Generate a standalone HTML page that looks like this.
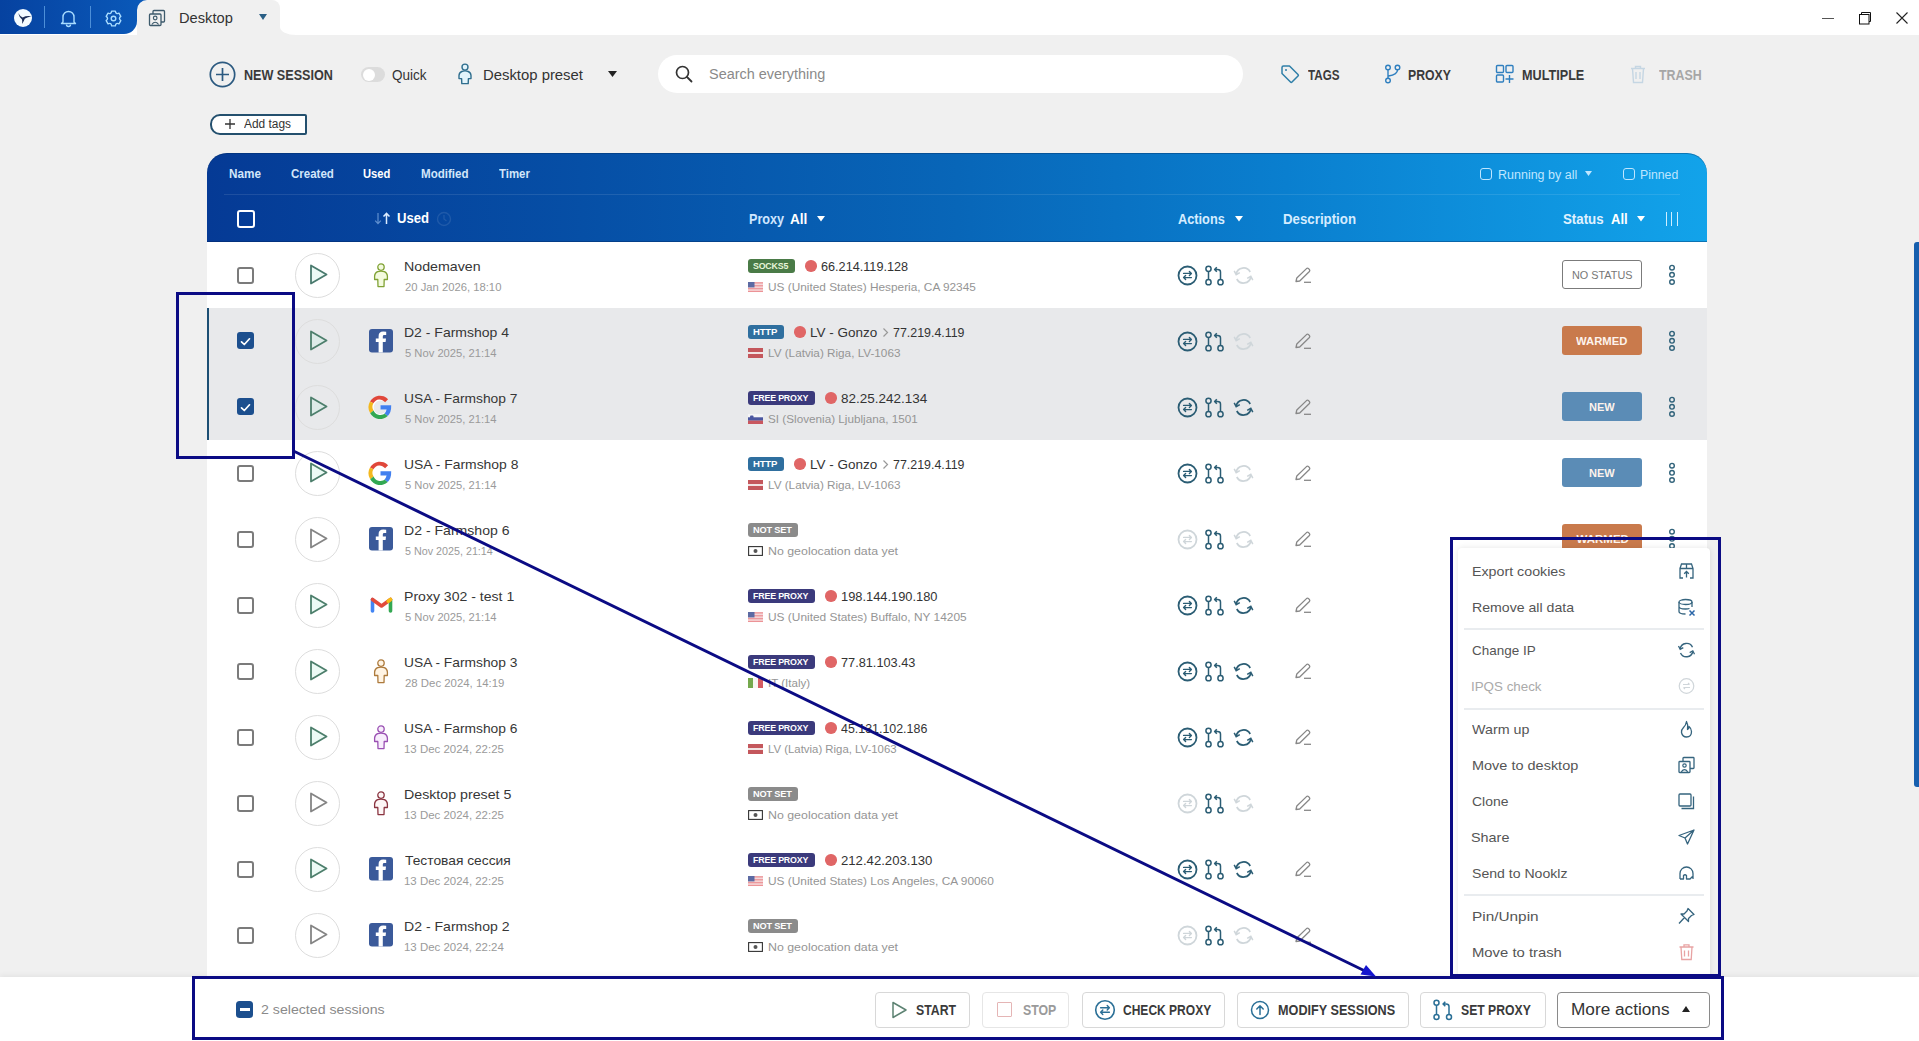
<!DOCTYPE html>
<html><head><meta charset="utf-8"><title>Desktop</title>
<style>
html,body{margin:0;padding:0;}
body{width:1919px;height:1041px;overflow:hidden;position:relative;background:#f0f0f0;font-family:"Liberation Sans", sans-serif;}
.t{position:absolute;white-space:nowrap;transform-origin:0 50%;}
svg{overflow:visible}
</style></head><body>
<div style="position:absolute;left:0;top:0;width:1919px;height:35px;background:#fff"></div>
<div style="position:absolute;left:137px;top:0;width:143px;height:35px;background:#f0f0f0;border-radius:11px 8px 0 0"></div>
<div style="position:absolute;left:0;top:0;width:137px;height:34px;background:linear-gradient(90deg,#0642a0,#0a58b8);border-radius:0 0 13px 0"></div>
<svg style="position:absolute;left:137px;top:0px;" width="10" height="10" viewBox="0 0 10 10"><path d="M0 0 H10 A10 10 0 0 0 0 10 Z" fill="#0a58b8"/></svg>
<svg style="position:absolute;left:280px;top:27px;" width="16" height="8" viewBox="0 0 16 8"><path d="M0 0 V8 H16 A16 8 0 0 1 0 0 Z" fill="#f0f0f0"/></svg>
<svg style="position:absolute;left:13px;top:8px;" width="20" height="20" viewBox="0 0 20 20"><circle cx="10" cy="10" r="9" fill="#f4fbff"/><path d="M5.2 5 Q7 8.4 9.6 9.4 Q13.4 7.6 18.4 8.3 Q13.6 9.3 11.8 10.8 Q10.8 13.6 9.1 15.9 Q9.4 12.6 9 11.4 Q6.2 9.2 5.2 5 Z" fill="#1b2c55"/></svg>
<div style="position:absolute;left:44px;top:6px;width:1px;height:22px;background:#4d8fd8"></div>
<div style="position:absolute;left:90px;top:6px;width:1px;height:22px;background:#4d8fd8"></div>
<svg style="position:absolute;left:60px;top:9px;" width="17" height="18" viewBox="0 0 17 18"><path d="M3 13 L3 8 A5.5 5.5 0 0 1 14 8 L14 13 L15.5 14.5 L1.5 14.5 Z" fill="none" stroke="#a8dcff" stroke-width="1.4" stroke-linejoin="round"/><path d="M6.5 15.5 A2 2 0 0 0 10.5 15.5" fill="none" stroke="#a8dcff" stroke-width="1.4"/></svg>
<svg style="position:absolute;left:105px;top:10px;" width="17" height="17" viewBox="0 0 17 17"><path d="M6.66 1.13 L10.34 1.13 Q10.80 4.52 13.97 3.22 L15.81 6.41 Q13.10 8.50 15.81 10.59 L13.97 13.78 Q10.80 12.48 10.34 15.87 L6.66 15.87 Q6.20 12.48 3.03 13.78 L1.19 10.59 Q3.90 8.50 1.19 6.41 L3.03 3.22 Q6.20 4.52 6.66 1.13 Z" fill="none" stroke="#a8dcff" stroke-width="1.4" stroke-linejoin="round"/><circle cx="8.5" cy="8.5" r="2.3" fill="none" stroke="#a8dcff" stroke-width="1.4"/></svg>
<svg style="position:absolute;left:148px;top:9px;" width="18" height="18" viewBox="0 0 18 18"><rect x="5" y="1.5" width="11.5" height="11.5" rx="1" fill="none" stroke="#3d5a6c" stroke-width="1.3"/><rect x="1.5" y="5" width="11.5" height="11.5" rx="1" fill="#f0f0f0" stroke="#3d5a6c" stroke-width="1.3"/><circle cx="7.2" cy="9" r="1.8" fill="none" stroke="#3d5a6c" stroke-width="1.2"/><path d="M3.8 15.5 Q7.2 11 10.6 15.5" fill="none" stroke="#3d5a6c" stroke-width="1.2"/></svg>
<div id="t45dc8daf" class="t" style="left:178.70px;top:10.65px;font-size:14.00px;line-height:14.00px;color:#333;font-weight:400;transform:scaleX(1.0480);">Desktop</div>
<svg style="position:absolute;left:258px;top:13px;" width="10" height="8" viewBox="0 0 10 8"><path d="M1 1 L9 1 L5 7Z" fill="#2a5f86"/></svg>
<div style="position:absolute;left:1822px;top:17.5px;width:12px;height:1px;background:#555"></div>
<svg style="position:absolute;left:1858px;top:11px;" width="14" height="14" viewBox="0 0 14 14"><rect x="1.5" y="3.5" width="9.5" height="9.5" fill="#fff" stroke="#111" stroke-width="1"/><path d="M3.5 3.5 V1.5 H12.5 V10.5 H11" fill="none" stroke="#111" stroke-width="1"/></svg>
<svg style="position:absolute;left:1896px;top:12px;" width="12" height="12" viewBox="0 0 12 12"><path d="M0.5 0.5 L11.5 11.5 M11.5 0.5 L0.5 11.5" stroke="#222" stroke-width="1.1"/></svg>
<svg style="position:absolute;left:209px;top:61px;" width="27" height="27" viewBox="0 0 27 27"><circle cx="13.5" cy="13.5" r="12.2" fill="none" stroke="#2c5a80" stroke-width="1.7"/><path d="M13.5 7 V20 M7 13.5 H20" stroke="#2c5a80" stroke-width="1.7"/></svg>
<div id="t79973cbb" class="t" style="left:244.25px;top:67.65px;font-size:14.00px;line-height:14.00px;color:#3a3a3a;font-weight:700;transform:scaleX(0.8994);">NEW SESSION</div>
<div style="position:absolute;left:361px;top:67px;width:24px;height:15px;border-radius:8px;background:#dcdcdc"></div>
<div style="position:absolute;left:362.5px;top:68.5px;width:12px;height:12px;border-radius:6px;background:#fff"></div>
<div id="t1a824882" class="t" style="left:392.00px;top:67.65px;font-size:14.00px;line-height:14.00px;color:#333;font-weight:400;transform:scaleX(0.9654);">Quick</div>
<svg style="position:absolute;left:457px;top:62px;" width="16" height="24" viewBox="0 0 16 24"><circle cx="8" cy="5.1" r="3" fill="#e3f4fb" stroke="#2f6e8e" stroke-width="1.4"/><path d="M4.8 9.5 Q8 8.3 11.2 9.5 Q13.8 10.6 14 13.5 V16.6 H11.4 L11.2 21.6 H4.8 L4.6 16.6 H2 V13.5 Q2.2 10.6 4.8 9.5 Z" fill="#e3f4fb" stroke="#2f6e8e" stroke-width="1.4" stroke-linejoin="round"/></svg>
<div id="t51332971" class="t" style="left:482.69px;top:67.65px;font-size:14.00px;line-height:14.00px;color:#333;font-weight:400;transform:scaleX(1.0615);">Desktop preset</div>
<svg style="position:absolute;left:607px;top:70px;" width="11" height="8" viewBox="0 0 11 8"><path d="M1 1 L10 1 L5.5 7Z" fill="#222"/></svg>
<div style="position:absolute;left:658px;top:55px;width:585px;height:38px;border-radius:19px;background:#fff"></div>
<svg style="position:absolute;left:675px;top:65px;" width="18" height="18" viewBox="0 0 18 18"><circle cx="7.5" cy="7.5" r="6" fill="none" stroke="#333" stroke-width="1.7"/><path d="M12 12 L16.5 16.5" stroke="#333" stroke-width="1.8" stroke-linecap="round"/></svg>
<div id="t7c4c2d72" class="t" style="left:709.00px;top:67.15px;font-size:14.00px;line-height:14.00px;color:#8a8a8a;font-weight:400;transform:scaleX(1.0308);">Search everything</div>
<svg style="position:absolute;left:1280px;top:64px;" width="20" height="20" viewBox="0 0 20 20"><path d="M2 3.5 Q2 2 3.5 2 L9.5 2 L18 10.5 Q18.8 11.3 18 12 L12 18 Q11.3 18.8 10.5 18 L2 9.5 Z" fill="none" stroke="#2f7fa8" stroke-width="1.5" stroke-linejoin="round"/><circle cx="6" cy="6" r="1" fill="#2f7fa8"/></svg>
<div id="t0d880b4f" class="t" style="left:1308.00px;top:67.65px;font-size:14.00px;line-height:14.00px;color:#3a3a3a;font-weight:700;transform:scaleX(0.8335);">TAGS</div>
<svg style="position:absolute;left:1384px;top:64px;" width="18" height="20" viewBox="0 0 18 20"><circle cx="4" cy="3.5" r="2.3" fill="none" stroke="#2f7fbf" stroke-width="1.4"/><circle cx="13.5" cy="3.5" r="2.3" fill="none" stroke="#2f7fbf" stroke-width="1.4"/><circle cx="4" cy="16.5" r="2.3" fill="none" stroke="#2f7fbf" stroke-width="1.4"/><path d="M4 6 V14 M13.5 6 Q13.5 10.5 4.5 12" fill="none" stroke="#2f7fbf" stroke-width="1.4"/></svg>
<div id="t71c831db" class="t" style="left:1408.25px;top:67.65px;font-size:14.00px;line-height:14.00px;color:#3a3a3a;font-weight:700;transform:scaleX(0.8759);">PROXY</div>
<svg style="position:absolute;left:1495px;top:64px;" width="20" height="20" viewBox="0 0 20 20"><rect x="1.5" y="1.5" width="7" height="7" rx="1" fill="none" stroke="#2f7fbf" stroke-width="1.4"/><rect x="11" y="1.5" width="7" height="7" rx="1" fill="none" stroke="#2f7fbf" stroke-width="1.4"/><rect x="1.5" y="11" width="7" height="7" rx="1" fill="none" stroke="#2f7fbf" stroke-width="1.4"/><path d="M14.5 11 V19 M10.5 15 H18.5" stroke="#2f7fbf" stroke-width="1.4"/></svg>
<div id="t15b5329f" class="t" style="left:1522.25px;top:67.65px;font-size:14.00px;line-height:14.00px;color:#3a3a3a;font-weight:700;transform:scaleX(0.9036);">MULTIPLE</div>
<svg style="position:absolute;left:1629px;top:64px;" width="18" height="20" viewBox="0 0 18 20"><path d="M2 4.5 H16 M6.5 4.5 V2.5 H11.5 V4.5 M3.5 4.5 L4.5 18.5 H13.5 L14.5 4.5 M7 8 V15 M11 8 V15" fill="none" stroke="#c5d6e3" stroke-width="1.4"/></svg>
<div id="t9c10934f" class="t" style="left:1659.25px;top:67.65px;font-size:14.00px;line-height:14.00px;color:#a6a6a6;font-weight:700;transform:scaleX(0.8836);">TRASH</div>
<div style="position:absolute;left:210px;top:113.5px;width:93px;height:17px;border:2px solid #24506e;border-radius:10px 2px 2px 10px;background:#fff"></div>
<svg style="position:absolute;left:224px;top:118px;" width="12" height="12" viewBox="0 0 12 12"><path d="M6 1 V11 M1 6 H11" stroke="#333" stroke-width="1.3"/></svg>
<div id="t14f7cf8c" class="t" style="left:244.25px;top:118.34px;font-size:12.00px;line-height:12.00px;color:#333;font-weight:400;transform:scaleX(0.9922);">Add tags</div>
<div style="position:absolute;left:207px;top:153px;width:1500px;height:89px;border-radius:20px 20px 0 0;background:linear-gradient(90deg,#053a95 0%,#064fa6 25%,#0866b8 50%,#0a7fcf 72%,#12a3ea 100%);box-shadow:inset 0 1px 0 rgba(0,40,90,0.35)"></div>
<div style="position:absolute;left:224px;top:194px;width:1456px;height:1px;background:rgba(255,255,255,0.10)"></div>
<div style="position:absolute;left:207px;top:241px;width:1500px;height:1px;background:rgba(0,30,80,0.35)"></div>
<div id="t68d6a6e7" class="t" style="left:229.00px;top:167.92px;font-size:12.50px;line-height:12.50px;color:#d2e6fa;font-weight:700;transform:scaleX(0.9386);">Name</div>
<div id="t37dddf84" class="t" style="left:291.00px;top:167.92px;font-size:12.50px;line-height:12.50px;color:#d2e6fa;font-weight:700;transform:scaleX(0.9205);">Created</div>
<div id="t0abc6be5" class="t" style="left:363.25px;top:167.92px;font-size:12.50px;line-height:12.50px;color:#ffffff;font-weight:700;transform:scaleX(0.8946);">Used</div>
<div id="t1608a88f" class="t" style="left:421.00px;top:167.92px;font-size:12.50px;line-height:12.50px;color:#d2e6fa;font-weight:700;transform:scaleX(0.9262);">Modified</div>
<div id="tbfaa99ed" class="t" style="left:499.00px;top:167.92px;font-size:12.50px;line-height:12.50px;color:#d2e6fa;font-weight:700;transform:scaleX(0.9131);">Timer</div>
<div style="position:absolute;left:1480px;top:168px;width:9.5px;height:9.5px;border:1.4px solid #bfe6ff;border-radius:3px"></div>
<div id="tb279ca0c" class="t" style="left:1498.00px;top:168.84px;font-size:12.00px;line-height:12.00px;color:#bfe6ff;font-weight:400;transform:scaleX(1.0414);">Running by all</div>
<svg style="position:absolute;left:1584px;top:170px;" width="9" height="7" viewBox="0 0 9 7"><path d="M1 1 L8 1 L4.5 6Z" fill="#bfe6ff"/></svg>
<div style="position:absolute;left:1623px;top:168px;width:9.5px;height:9.5px;border:1.4px solid #bfe6ff;border-radius:3px"></div>
<div id="tc8197d89" class="t" style="left:1640.25px;top:168.84px;font-size:12.00px;line-height:12.00px;color:#bfe6ff;font-weight:400;transform:scaleX(1.0224);">Pinned</div>
<div style="position:absolute;left:237px;top:210px;width:13.5px;height:13.5px;border:2px solid #fff;border-radius:3px"></div>
<svg style="position:absolute;left:374px;top:212px;" width="18" height="13" viewBox="0 0 18 13"><path d="M4 1 V11.5 M1.2 8.6 L4 11.6 L6.8 8.6" fill="none" stroke="#5f8fcf" stroke-width="1.2"/><path d="M12.5 12 V1.5 M9.5 4.5 L12.5 1.4 L15.5 4.5" fill="none" stroke="#dcecff" stroke-width="1.5"/></svg>
<div id="tecbef1e9" class="t" style="left:397.00px;top:210.73px;font-size:14.50px;line-height:14.50px;color:#ffffff;font-weight:700;transform:scaleX(0.9036);">Used</div>
<svg style="position:absolute;left:436px;top:211px;" width="16" height="16" viewBox="0 0 16 16"><circle cx="8" cy="8" r="6.5" fill="none" stroke="rgba(255,255,255,0.10)" stroke-width="1.4"/><path d="M8 4 V8 L10.5 10" fill="none" stroke="rgba(255,255,255,0.10)" stroke-width="1.3"/></svg>
<div id="td2b10ee0" class="t" style="left:749.00px;top:212.15px;font-size:14.00px;line-height:14.00px;color:#cfe6ff;font-weight:700;transform:scaleX(0.9013);">Proxy</div>
<div id="t0072ece0" class="t" style="left:790.25px;top:212.15px;font-size:14.00px;line-height:14.00px;color:#ffffff;font-weight:700;transform:scaleX(0.9722);">All</div>
<svg style="position:absolute;left:816px;top:215px;" width="10" height="7" viewBox="0 0 10 7"><path d="M1 1 L9 1 L5 6.5Z" fill="#fff"/></svg>
<div id="t325a7944" class="t" style="left:1178.00px;top:212.15px;font-size:14.00px;line-height:14.00px;color:#d5ecff;font-weight:700;transform:scaleX(0.9117);">Actions</div>
<svg style="position:absolute;left:1234px;top:215px;" width="10" height="7" viewBox="0 0 10 7"><path d="M1 1 L9 1 L5 6.5Z" fill="#fff"/></svg>
<div id="t5decaf1a" class="t" style="left:1283.00px;top:212.15px;font-size:14.00px;line-height:14.00px;color:#d5ecff;font-weight:700;transform:scaleX(0.9483);">Description</div>
<div id="t4433726f" class="t" style="left:1563.00px;top:212.15px;font-size:14.00px;line-height:14.00px;color:#e0f2ff;font-weight:700;transform:scaleX(0.9480);">Status</div>
<div id="t497a9a33" class="t" style="left:1611.00px;top:212.15px;font-size:14.00px;line-height:14.00px;color:#ffffff;font-weight:700;transform:scaleX(0.9290);">All</div>
<svg style="position:absolute;left:1636px;top:215px;" width="10" height="7" viewBox="0 0 10 7"><path d="M1 1 L9 1 L5 6.5Z" fill="#fff"/></svg>
<div style="position:absolute;left:1665.5px;top:212px;width:1.3px;height:14px;background:#cfeeff"></div>
<div style="position:absolute;left:1671px;top:212px;width:1.3px;height:14px;background:#cfeeff"></div>
<div style="position:absolute;left:1676.5px;top:212px;width:1.3px;height:14px;background:#cfeeff"></div>
<div style="position:absolute;left:207px;top:242px;width:1500px;height:736px;background:#fff"></div>
<div style="position:absolute;left:237px;top:266.5px;width:13px;height:13px;border:2px solid #7b7b7b;border-radius:3px"></div>
<div style="position:absolute;left:294.5px;top:252.5px;width:43px;height:43px;border:1.5px solid #dddddd;border-radius:50%"></div>
<svg style="position:absolute;left:308px;top:264px;" width="22" height="22" viewBox="0 0 22 22"><path d="M3 1.5 L18.5 10.5 L3 19.5 Z" fill="rgba(200,240,225,0.35)" stroke="#4a7a6e" stroke-width="1.8" stroke-linejoin="round"/></svg>
<svg style="position:absolute;left:373px;top:263px;" width="16" height="24" viewBox="0 0 16 24"><circle cx="8" cy="4.1" r="3.2" fill="#f3fadf" stroke="#80a235" stroke-width="1.3"/><path d="M4.6 8.7 Q8 7.4 11.4 8.7 Q14.2 9.9 14.4 13 V16.5 H11.2 L11 23.6 H5 L4.8 16.5 H1.6 V13 Q1.8 9.9 4.6 8.7 Z" fill="#f3fadf" stroke="#80a235" stroke-width="1.3" stroke-linejoin="round"/></svg>
<div id="taba45b5d" class="t" style="left:403.95px;top:259.57px;font-size:13.50px;line-height:13.50px;color:#363636;font-weight:400;transform:scaleX(1.0521);">Nodemaven</div>
<div id="t9d6233e4" class="t" style="left:405.20px;top:282.27px;font-size:11.50px;line-height:11.50px;color:#9a9a9a;font-weight:400;transform:scaleX(0.9788);">20 Jan 2026, 18:10</div>
<div style="position:absolute;left:748px;top:259.0px;width:47px;height:14px;border-radius:3px;background:#4a7b47"></div>
<div id="t6f3aabb4" class="t" style="left:753.25px;top:261.46px;font-size:9.50px;line-height:9.50px;color:#e7f6d9;font-weight:700;transform:scaleX(0.9282);letter-spacing:-0.2px;">SOCKS5</div>
<div style="position:absolute;left:805.0px;top:260.2px;width:11.5px;height:11.5px;border-radius:50%;background:#e06666"></div>
<div id="t3f5c9be8" class="t" style="left:821.25px;top:260.00px;font-size:13.00px;line-height:13.00px;color:#333;font-weight:400;transform:scaleX(0.9740);">66.214.119.128</div>
<svg style="position:absolute;left:748px;top:281.5px;opacity:0.9" width="15" height="10" viewBox="0 0 15 10"><rect x="0" y="0.00" width="15" height="0.77" fill="#e4666b"/><rect x="0" y="0.77" width="15" height="0.77" fill="#f4d6d8"/><rect x="0" y="1.54" width="15" height="0.77" fill="#e4666b"/><rect x="0" y="2.31" width="15" height="0.77" fill="#f4d6d8"/><rect x="0" y="3.08" width="15" height="0.77" fill="#e4666b"/><rect x="0" y="3.85" width="15" height="0.77" fill="#f4d6d8"/><rect x="0" y="4.62" width="15" height="0.77" fill="#e4666b"/><rect x="0" y="5.39" width="15" height="0.77" fill="#f4d6d8"/><rect x="0" y="6.16" width="15" height="0.77" fill="#e4666b"/><rect x="0" y="6.93" width="15" height="0.77" fill="#f4d6d8"/><rect x="0" y="7.70" width="15" height="0.77" fill="#e4666b"/><rect x="0" y="8.47" width="15" height="0.77" fill="#f4d6d8"/><rect x="0" y="9.24" width="15" height="0.77" fill="#e4666b"/><rect x="0" y="0" width="6.5" height="5.4" fill="#4b5a9a"/></svg>
<div id="t06fbf17f" class="t" style="left:768.00px;top:281.77px;font-size:11.50px;line-height:11.50px;color:#959595;font-weight:400;transform:scaleX(1.0289);">US (United States) Hesperia, CA 92345</div>
<svg style="position:absolute;left:1176.5px;top:264.5px;" width="21" height="21" viewBox="0 0 21 21"><circle cx="10.5" cy="10.5" r="9" fill="none" stroke="#2b5d74" stroke-width="1.8"/><path d="M6.6 8.4 H14.4 M12.4 6.4 L14.4 8.4 L12.4 10.4 M14.4 12.6 H6.6 M8.6 10.6 L6.6 12.6 L8.6 14.6" fill="none" stroke="#2b5d74" stroke-width="1.4" stroke-linecap="round" stroke-linejoin="round"/></svg>
<svg style="position:absolute;left:1204px;top:264.5px;" width="21" height="21" viewBox="0 0 21 21"><circle cx="4.5" cy="3.8" r="2.6" fill="none" stroke="#2b5d74" stroke-width="1.5"/><circle cx="4.5" cy="17.2" r="2.6" fill="none" stroke="#2b5d74" stroke-width="1.5"/><circle cx="16.5" cy="17.2" r="2.6" fill="none" stroke="#2b5d74" stroke-width="1.5"/><path d="M4.5 6.4 V14.6 M16.5 14.6 V7 Q16.5 4.5 13.5 4.5 L11 4.5 M12.8 2.2 L10.6 4.5 L12.8 6.8" fill="none" stroke="#2b5d74" stroke-width="1.5" stroke-linejoin="round"/></svg>
<svg style="position:absolute;left:1232.5px;top:264.5px;" width="21" height="21" viewBox="0 0 21 21"><path d="M3.2 9 A7.5 7.5 0 0 1 17.2 7 M17.8 12 A7.5 7.5 0 0 1 3.8 14" fill="none" stroke="#cfd6da" stroke-width="1.7"/><path d="M1.2 5.8 L3.2 9.6 L6.8 7.6 M19.8 15.2 L17.8 11.4 L14.2 13.4" fill="none" stroke="#cfd6da" stroke-width="1.5"/></svg>
<svg style="position:absolute;left:1294px;top:266.5px;" width="19" height="17" viewBox="0 0 19 17"><path d="M2 14.5 L2.8 11 L12.5 1.6 Q13.5 0.8 14.5 1.6 L15.4 2.5 Q16.2 3.5 15.4 4.5 L5.7 14 Z" fill="none" stroke="#888888" stroke-width="1.3" stroke-linejoin="round"/><path d="M10 15.3 H17" stroke="#888888" stroke-width="1.3"/></svg>
<div style="position:absolute;left:1562px;top:260.0px;width:78px;height:27px;border:1px solid #7b7b7b;border-radius:3px;background:#fff"></div>
<div id="t93c0c0b4" class="t" style="left:1572.00px;top:270.19px;font-size:11.00px;line-height:11.00px;color:#777;font-weight:400;transform:scaleX(0.9860);">NO STATUS</div>
<svg style="position:absolute;left:1668px;top:264px;" width="8" height="22" viewBox="0 0 8 22"><circle cx="4" cy="3.7" r="2.3" fill="none" stroke="#30627a" stroke-width="1.4"/><circle cx="4" cy="10.8" r="2.3" fill="none" stroke="#30627a" stroke-width="1.4"/><circle cx="4" cy="18" r="2.3" fill="none" stroke="#30627a" stroke-width="1.4"/></svg>
<div style="position:absolute;left:207px;top:308px;width:1500px;height:66px;background:#e8e9eb"></div>
<div style="position:absolute;left:207px;top:308px;width:2px;height:66px;background:#1d4f74"></div>
<div style="position:absolute;left:237px;top:332px;width:17px;height:17px;border-radius:3px;background:#1c4f8e"></div>
<svg style="position:absolute;left:237px;top:332.5px;" width="17" height="17" viewBox="0 0 17 17"><path d="M4.5 8.8 L7.3 11.5 L12.5 5.8" fill="none" stroke="#fff" stroke-width="1.7" stroke-linecap="round" stroke-linejoin="round"/></svg>
<div style="position:absolute;left:294.5px;top:318.5px;width:43px;height:43px;border:1.5px solid #dddddd;border-radius:50%"></div>
<svg style="position:absolute;left:308px;top:330px;" width="22" height="22" viewBox="0 0 22 22"><path d="M3 1.5 L18.5 10.5 L3 19.5 Z" fill="rgba(200,240,225,0.35)" stroke="#4d7f6c" stroke-width="1.8" stroke-linejoin="round"/></svg>
<svg style="position:absolute;left:369px;top:329px;" width="24" height="24" viewBox="0 0 24 24"><rect x="0" y="0" width="24" height="23.5" rx="3" fill="#3b5a9a"/><path d="M9.6 23.5 V13 H6.8 V9.6 H9.6 V7.2 Q9.6 2.6 14.2 2.6 L17.2 2.7 V6 H15.2 Q13.8 6 13.8 7.4 V9.6 H17 L16.6 13 H13.8 V23.5 Z" fill="#fff"/></svg>
<div id="tc99fb31c" class="t" style="left:403.96px;top:325.57px;font-size:13.50px;line-height:13.50px;color:#363636;font-weight:400;transform:scaleX(1.0367);">D2 - Farmshop 4</div>
<div id="t6d5245b1" class="t" style="left:405.20px;top:348.27px;font-size:11.50px;line-height:11.50px;color:#9a9a9a;font-weight:400;transform:scaleX(0.9743);">5 Nov 2025, 21:14</div>
<div style="position:absolute;left:748px;top:325.0px;width:36px;height:14px;border-radius:3px;background:#2f6f9f"></div>
<div id="tafebe13c" class="t" style="left:753.25px;top:327.46px;font-size:9.50px;line-height:9.50px;color:#ffffff;font-weight:700;transform:scaleX(1.0054);letter-spacing:-0.2px;">HTTP</div>
<div style="position:absolute;left:794.0px;top:326.2px;width:11.5px;height:11.5px;border-radius:50%;background:#e06666"></div>
<div id="tba149c40" class="t" style="left:809.71px;top:326.00px;font-size:13.00px;line-height:13.00px;color:#333;font-weight:400;transform:scaleX(1.0373);">LV - Gonzo</div>
<svg style="position:absolute;left:881.5px;top:327px;" width="7" height="11" viewBox="0 0 7 11"><path d="M1.5 1.5 L5.5 5.5 L1.5 9.5" fill="none" stroke="#999" stroke-width="1.2"/></svg>
<div id="td32dfa6a" class="t" style="left:893.00px;top:326.00px;font-size:13.00px;line-height:13.00px;color:#333;font-weight:400;transform:scaleX(0.9541);">77.219.4.119</div>
<svg style="position:absolute;left:748px;top:347.5px;" width="15" height="10" viewBox="0 0 15 10"><rect width="15" height="10" fill="#c4575c"/><rect y="4" width="15" height="2" fill="#f1e3e3"/></svg>
<div id="t6880531c" class="t" style="left:768.00px;top:347.77px;font-size:11.50px;line-height:11.50px;color:#959595;font-weight:400;transform:scaleX(1.0187);">LV (Latvia) Riga, LV-1063</div>
<svg style="position:absolute;left:1176.5px;top:330.5px;" width="21" height="21" viewBox="0 0 21 21"><circle cx="10.5" cy="10.5" r="9" fill="none" stroke="#2b5d74" stroke-width="1.8"/><path d="M6.6 8.4 H14.4 M12.4 6.4 L14.4 8.4 L12.4 10.4 M14.4 12.6 H6.6 M8.6 10.6 L6.6 12.6 L8.6 14.6" fill="none" stroke="#2b5d74" stroke-width="1.4" stroke-linecap="round" stroke-linejoin="round"/></svg>
<svg style="position:absolute;left:1204px;top:330.5px;" width="21" height="21" viewBox="0 0 21 21"><circle cx="4.5" cy="3.8" r="2.6" fill="none" stroke="#2b5d74" stroke-width="1.5"/><circle cx="4.5" cy="17.2" r="2.6" fill="none" stroke="#2b5d74" stroke-width="1.5"/><circle cx="16.5" cy="17.2" r="2.6" fill="none" stroke="#2b5d74" stroke-width="1.5"/><path d="M4.5 6.4 V14.6 M16.5 14.6 V7 Q16.5 4.5 13.5 4.5 L11 4.5 M12.8 2.2 L10.6 4.5 L12.8 6.8" fill="none" stroke="#2b5d74" stroke-width="1.5" stroke-linejoin="round"/></svg>
<svg style="position:absolute;left:1232.5px;top:330.5px;" width="21" height="21" viewBox="0 0 21 21"><path d="M3.2 9 A7.5 7.5 0 0 1 17.2 7 M17.8 12 A7.5 7.5 0 0 1 3.8 14" fill="none" stroke="#cfd6da" stroke-width="1.7"/><path d="M1.2 5.8 L3.2 9.6 L6.8 7.6 M19.8 15.2 L17.8 11.4 L14.2 13.4" fill="none" stroke="#cfd6da" stroke-width="1.5"/></svg>
<svg style="position:absolute;left:1294px;top:332.5px;" width="19" height="17" viewBox="0 0 19 17"><path d="M2 14.5 L2.8 11 L12.5 1.6 Q13.5 0.8 14.5 1.6 L15.4 2.5 Q16.2 3.5 15.4 4.5 L5.7 14 Z" fill="none" stroke="#888888" stroke-width="1.3" stroke-linejoin="round"/><path d="M10 15.3 H17" stroke="#888888" stroke-width="1.3"/></svg>
<div style="position:absolute;left:1562px;top:326.0px;width:80px;height:29px;border-radius:3px;background:#c97a4c"></div>
<div id="t92f52804" class="t" style="left:1576.25px;top:335.77px;font-size:11.50px;line-height:11.50px;color:#fdf3ec;font-weight:700;transform:scaleX(0.9796);">WARMED</div>
<svg style="position:absolute;left:1668px;top:330px;" width="8" height="22" viewBox="0 0 8 22"><circle cx="4" cy="3.7" r="2.3" fill="none" stroke="#30627a" stroke-width="1.4"/><circle cx="4" cy="10.8" r="2.3" fill="none" stroke="#30627a" stroke-width="1.4"/><circle cx="4" cy="18" r="2.3" fill="none" stroke="#30627a" stroke-width="1.4"/></svg>
<div style="position:absolute;left:207px;top:374px;width:1500px;height:66px;background:#e8e9eb"></div>
<div style="position:absolute;left:207px;top:374px;width:2px;height:66px;background:#1d4f74"></div>
<div style="position:absolute;left:237px;top:398px;width:17px;height:17px;border-radius:3px;background:#1c4f8e"></div>
<svg style="position:absolute;left:237px;top:398.5px;" width="17" height="17" viewBox="0 0 17 17"><path d="M4.5 8.8 L7.3 11.5 L12.5 5.8" fill="none" stroke="#fff" stroke-width="1.7" stroke-linecap="round" stroke-linejoin="round"/></svg>
<div style="position:absolute;left:294.5px;top:384.5px;width:43px;height:43px;border:1.5px solid #dddddd;border-radius:50%"></div>
<svg style="position:absolute;left:308px;top:396px;" width="22" height="22" viewBox="0 0 22 22"><path d="M3 1.5 L18.5 10.5 L3 19.5 Z" fill="rgba(200,240,225,0.35)" stroke="#4d7f6c" stroke-width="1.8" stroke-linejoin="round"/></svg>
<svg style="position:absolute;left:369px;top:395.5px;" width="23" height="23" viewBox="0 0 23 23"><path d="M21.6 9.5 H11.5 V13.6 H17.3 Q16.5 17.6 11.5 18.2 A6.8 6.8 0 1 1 16 6.3 L19 3.4 A11 11 0 1 0 11.5 22.5 Q22.2 22.5 21.6 9.5Z" fill="#fff"/><path d="M4.4 7.3 A7 7 0 0 1 16.1 6.3 L19.1 3.3 A11.2 11.2 0 0 0 1 5.6 Z" fill="#e0473a"/><path d="M1 5.6 A11.2 11.2 0 0 0 1.2 17.2 L4.6 14.6 A7 7 0 0 1 4.4 7.3 Z" fill="#f3b81f"/><path d="M1.2 17.2 A11.2 11.2 0 0 0 18.8 19.9 L15.6 17.4 A7 7 0 0 1 4.6 14.6 Z" fill="#32a853"/><path d="M18.8 19.9 Q22.4 16.6 22.2 9.3 H11.5 V13.6 H17.6 Q17 15.9 15.6 17.4 Z" fill="#4280ef"/></svg>
<div id="t6e6847e3" class="t" style="left:403.98px;top:391.57px;font-size:13.50px;line-height:13.50px;color:#363636;font-weight:400;transform:scaleX(1.0213);">USA - Farmshop 7</div>
<div id="tb19c0c64" class="t" style="left:405.20px;top:414.27px;font-size:11.50px;line-height:11.50px;color:#9a9a9a;font-weight:400;transform:scaleX(0.9743);">5 Nov 2025, 21:14</div>
<div style="position:absolute;left:748px;top:391.0px;width:67px;height:14px;border-radius:3px;background:#3b3a7c"></div>
<div id="t4a67f150" class="t" style="left:753.25px;top:393.46px;font-size:9.50px;line-height:9.50px;color:#ffffff;font-weight:700;transform:scaleX(0.9318);letter-spacing:-0.2px;">FREE PROXY</div>
<div style="position:absolute;left:825.0px;top:392.2px;width:11.5px;height:11.5px;border-radius:50%;background:#e06666"></div>
<div id="t565e19df" class="t" style="left:841.25px;top:392.00px;font-size:13.00px;line-height:13.00px;color:#333;font-weight:400;transform:scaleX(1.0370);">82.25.242.134</div>
<svg style="position:absolute;left:748px;top:413.5px;" width="15" height="10" viewBox="0 0 15 10"><rect width="15" height="3.4" fill="#f4f4f6"/><rect y="3.3" width="15" height="3.4" fill="#4a56a0"/><rect y="6.6" width="15" height="3.4" fill="#c9575f"/><rect x="2" y="1.5" width="3.5" height="3.6" rx="1" fill="#4a56a0"/></svg>
<div id="tdde76788" class="t" style="left:768.00px;top:413.77px;font-size:11.50px;line-height:11.50px;color:#959595;font-weight:400;transform:scaleX(1.0184);">SI (Slovenia) Ljubljana, 1501</div>
<svg style="position:absolute;left:1176.5px;top:396.5px;" width="21" height="21" viewBox="0 0 21 21"><circle cx="10.5" cy="10.5" r="9" fill="none" stroke="#2b5d74" stroke-width="1.8"/><path d="M6.6 8.4 H14.4 M12.4 6.4 L14.4 8.4 L12.4 10.4 M14.4 12.6 H6.6 M8.6 10.6 L6.6 12.6 L8.6 14.6" fill="none" stroke="#2b5d74" stroke-width="1.4" stroke-linecap="round" stroke-linejoin="round"/></svg>
<svg style="position:absolute;left:1204px;top:396.5px;" width="21" height="21" viewBox="0 0 21 21"><circle cx="4.5" cy="3.8" r="2.6" fill="none" stroke="#2b5d74" stroke-width="1.5"/><circle cx="4.5" cy="17.2" r="2.6" fill="none" stroke="#2b5d74" stroke-width="1.5"/><circle cx="16.5" cy="17.2" r="2.6" fill="none" stroke="#2b5d74" stroke-width="1.5"/><path d="M4.5 6.4 V14.6 M16.5 14.6 V7 Q16.5 4.5 13.5 4.5 L11 4.5 M12.8 2.2 L10.6 4.5 L12.8 6.8" fill="none" stroke="#2b5d74" stroke-width="1.5" stroke-linejoin="round"/></svg>
<svg style="position:absolute;left:1232.5px;top:396.5px;" width="21" height="21" viewBox="0 0 21 21"><path d="M3.2 9 A7.5 7.5 0 0 1 17.2 7 M17.8 12 A7.5 7.5 0 0 1 3.8 14" fill="none" stroke="#2b5d74" stroke-width="1.7"/><path d="M1.2 5.8 L3.2 9.6 L6.8 7.6 M19.8 15.2 L17.8 11.4 L14.2 13.4" fill="none" stroke="#2b5d74" stroke-width="1.5"/></svg>
<svg style="position:absolute;left:1294px;top:398.5px;" width="19" height="17" viewBox="0 0 19 17"><path d="M2 14.5 L2.8 11 L12.5 1.6 Q13.5 0.8 14.5 1.6 L15.4 2.5 Q16.2 3.5 15.4 4.5 L5.7 14 Z" fill="none" stroke="#888888" stroke-width="1.3" stroke-linejoin="round"/><path d="M10 15.3 H17" stroke="#888888" stroke-width="1.3"/></svg>
<div style="position:absolute;left:1562px;top:392.0px;width:80px;height:29px;border-radius:3px;background:#5b8cb6"></div>
<div id="tbf5abbd2" class="t" style="left:1589.00px;top:401.77px;font-size:11.50px;line-height:11.50px;color:#fdf3ec;font-weight:700;transform:scaleX(0.9602);">NEW</div>
<svg style="position:absolute;left:1668px;top:396px;" width="8" height="22" viewBox="0 0 8 22"><circle cx="4" cy="3.7" r="2.3" fill="none" stroke="#30627a" stroke-width="1.4"/><circle cx="4" cy="10.8" r="2.3" fill="none" stroke="#30627a" stroke-width="1.4"/><circle cx="4" cy="18" r="2.3" fill="none" stroke="#30627a" stroke-width="1.4"/></svg>
<div style="position:absolute;left:237px;top:464.5px;width:13px;height:13px;border:2px solid #7b7b7b;border-radius:3px"></div>
<div style="position:absolute;left:294.5px;top:450.5px;width:43px;height:43px;border:1.5px solid #dddddd;border-radius:50%"></div>
<svg style="position:absolute;left:308px;top:462px;" width="22" height="22" viewBox="0 0 22 22"><path d="M3 1.5 L18.5 10.5 L3 19.5 Z" fill="rgba(200,240,225,0.35)" stroke="#4d7f6c" stroke-width="1.8" stroke-linejoin="round"/></svg>
<svg style="position:absolute;left:369px;top:461.5px;" width="23" height="23" viewBox="0 0 23 23"><path d="M21.6 9.5 H11.5 V13.6 H17.3 Q16.5 17.6 11.5 18.2 A6.8 6.8 0 1 1 16 6.3 L19 3.4 A11 11 0 1 0 11.5 22.5 Q22.2 22.5 21.6 9.5Z" fill="#fff"/><path d="M4.4 7.3 A7 7 0 0 1 16.1 6.3 L19.1 3.3 A11.2 11.2 0 0 0 1 5.6 Z" fill="#e0473a"/><path d="M1 5.6 A11.2 11.2 0 0 0 1.2 17.2 L4.6 14.6 A7 7 0 0 1 4.4 7.3 Z" fill="#f3b81f"/><path d="M1.2 17.2 A11.2 11.2 0 0 0 18.8 19.9 L15.6 17.4 A7 7 0 0 1 4.6 14.6 Z" fill="#32a853"/><path d="M18.8 19.9 Q22.4 16.6 22.2 9.3 H11.5 V13.6 H17.6 Q17 15.9 15.6 17.4 Z" fill="#4280ef"/></svg>
<div id="t89fd8aa6" class="t" style="left:403.97px;top:457.57px;font-size:13.50px;line-height:13.50px;color:#363636;font-weight:400;transform:scaleX(1.0305);">USA - Farmshop 8</div>
<div id="t4a329805" class="t" style="left:405.20px;top:480.27px;font-size:11.50px;line-height:11.50px;color:#9a9a9a;font-weight:400;transform:scaleX(0.9745);">5 Nov 2025, 21:14</div>
<div style="position:absolute;left:748px;top:457.0px;width:36px;height:14px;border-radius:3px;background:#2f6f9f"></div>
<div id="ta94cf1d3" class="t" style="left:753.25px;top:459.46px;font-size:9.50px;line-height:9.50px;color:#ffffff;font-weight:700;transform:scaleX(1.0054);letter-spacing:-0.2px;">HTTP</div>
<div style="position:absolute;left:794.0px;top:458.2px;width:11.5px;height:11.5px;border-radius:50%;background:#e06666"></div>
<div id="t5a375c25" class="t" style="left:809.71px;top:458.00px;font-size:13.00px;line-height:13.00px;color:#333;font-weight:400;transform:scaleX(1.0373);">LV - Gonzo</div>
<svg style="position:absolute;left:881.5px;top:459px;" width="7" height="11" viewBox="0 0 7 11"><path d="M1.5 1.5 L5.5 5.5 L1.5 9.5" fill="none" stroke="#999" stroke-width="1.2"/></svg>
<div id="td9aba0a0" class="t" style="left:893.00px;top:458.00px;font-size:13.00px;line-height:13.00px;color:#333;font-weight:400;transform:scaleX(0.9541);">77.219.4.119</div>
<svg style="position:absolute;left:748px;top:479.5px;" width="15" height="10" viewBox="0 0 15 10"><rect width="15" height="10" fill="#c4575c"/><rect y="4" width="15" height="2" fill="#f1e3e3"/></svg>
<div id="t0b9aef72" class="t" style="left:768.00px;top:479.77px;font-size:11.50px;line-height:11.50px;color:#959595;font-weight:400;transform:scaleX(1.0187);">LV (Latvia) Riga, LV-1063</div>
<svg style="position:absolute;left:1176.5px;top:462.5px;" width="21" height="21" viewBox="0 0 21 21"><circle cx="10.5" cy="10.5" r="9" fill="none" stroke="#2b5d74" stroke-width="1.8"/><path d="M6.6 8.4 H14.4 M12.4 6.4 L14.4 8.4 L12.4 10.4 M14.4 12.6 H6.6 M8.6 10.6 L6.6 12.6 L8.6 14.6" fill="none" stroke="#2b5d74" stroke-width="1.4" stroke-linecap="round" stroke-linejoin="round"/></svg>
<svg style="position:absolute;left:1204px;top:462.5px;" width="21" height="21" viewBox="0 0 21 21"><circle cx="4.5" cy="3.8" r="2.6" fill="none" stroke="#2b5d74" stroke-width="1.5"/><circle cx="4.5" cy="17.2" r="2.6" fill="none" stroke="#2b5d74" stroke-width="1.5"/><circle cx="16.5" cy="17.2" r="2.6" fill="none" stroke="#2b5d74" stroke-width="1.5"/><path d="M4.5 6.4 V14.6 M16.5 14.6 V7 Q16.5 4.5 13.5 4.5 L11 4.5 M12.8 2.2 L10.6 4.5 L12.8 6.8" fill="none" stroke="#2b5d74" stroke-width="1.5" stroke-linejoin="round"/></svg>
<svg style="position:absolute;left:1232.5px;top:462.5px;" width="21" height="21" viewBox="0 0 21 21"><path d="M3.2 9 A7.5 7.5 0 0 1 17.2 7 M17.8 12 A7.5 7.5 0 0 1 3.8 14" fill="none" stroke="#cfd6da" stroke-width="1.7"/><path d="M1.2 5.8 L3.2 9.6 L6.8 7.6 M19.8 15.2 L17.8 11.4 L14.2 13.4" fill="none" stroke="#cfd6da" stroke-width="1.5"/></svg>
<svg style="position:absolute;left:1294px;top:464.5px;" width="19" height="17" viewBox="0 0 19 17"><path d="M2 14.5 L2.8 11 L12.5 1.6 Q13.5 0.8 14.5 1.6 L15.4 2.5 Q16.2 3.5 15.4 4.5 L5.7 14 Z" fill="none" stroke="#888888" stroke-width="1.3" stroke-linejoin="round"/><path d="M10 15.3 H17" stroke="#888888" stroke-width="1.3"/></svg>
<div style="position:absolute;left:1562px;top:458.0px;width:80px;height:29px;border-radius:3px;background:#5b8cb6"></div>
<div id="t4a88a097" class="t" style="left:1589.00px;top:467.77px;font-size:11.50px;line-height:11.50px;color:#fdf3ec;font-weight:700;transform:scaleX(0.9602);">NEW</div>
<svg style="position:absolute;left:1668px;top:462px;" width="8" height="22" viewBox="0 0 8 22"><circle cx="4" cy="3.7" r="2.3" fill="none" stroke="#30627a" stroke-width="1.4"/><circle cx="4" cy="10.8" r="2.3" fill="none" stroke="#30627a" stroke-width="1.4"/><circle cx="4" cy="18" r="2.3" fill="none" stroke="#30627a" stroke-width="1.4"/></svg>
<div style="position:absolute;left:237px;top:530.5px;width:13px;height:13px;border:2px solid #7b7b7b;border-radius:3px"></div>
<div style="position:absolute;left:294.5px;top:516.5px;width:43px;height:43px;border:1.5px solid #dddddd;border-radius:50%"></div>
<svg style="position:absolute;left:308px;top:528px;" width="22" height="22" viewBox="0 0 22 22"><path d="M3 1.5 L18.5 10.5 L3 19.5 Z" fill="none" stroke="#858585" stroke-width="1.8" stroke-linejoin="round"/></svg>
<svg style="position:absolute;left:369px;top:527px;" width="24" height="24" viewBox="0 0 24 24"><rect x="0" y="0" width="24" height="23.5" rx="3" fill="#3b5a9a"/><path d="M9.6 23.5 V13 H6.8 V9.6 H9.6 V7.2 Q9.6 2.6 14.2 2.6 L17.2 2.7 V6 H15.2 Q13.8 6 13.8 7.4 V9.6 H17 L16.6 13 H13.8 V23.5 Z" fill="#fff"/></svg>
<div id="t2e58dd8c" class="t" style="left:403.96px;top:523.57px;font-size:13.50px;line-height:13.50px;color:#363636;font-weight:400;transform:scaleX(1.0424);">D2 - Farmshop 6</div>
<div id="t416318ca" class="t" style="left:405.20px;top:546.27px;font-size:11.50px;line-height:11.50px;color:#9a9a9a;font-weight:400;transform:scaleX(0.9342);">5 Nov 2025, 21:14</div>
<div style="position:absolute;left:748px;top:523.0px;width:50px;height:14px;border-radius:3px;background:#8b8b8b"></div>
<div id="t1f50a4e0" class="t" style="left:753.25px;top:525.46px;font-size:9.50px;line-height:9.50px;color:#ffffff;font-weight:700;transform:scaleX(0.9710);letter-spacing:-0.2px;">NOT SET</div>
<svg style="position:absolute;left:748px;top:545.5px;" width="15" height="10" viewBox="0 0 15 10"><rect x="0.6" y="0.6" width="13.8" height="8.8" fill="#fff" stroke="#333" stroke-width="1.1"/><circle cx="7.5" cy="5" r="2" fill="#555"/></svg>
<div id="t44ce0290" class="t" style="left:768.00px;top:545.77px;font-size:11.50px;line-height:11.50px;color:#959595;font-weight:400;transform:scaleX(1.0754);">No geolocation data yet</div>
<svg style="position:absolute;left:1176.5px;top:528.5px;" width="21" height="21" viewBox="0 0 21 21"><circle cx="10.5" cy="10.5" r="9" fill="none" stroke="#cfd6da" stroke-width="1.8"/><path d="M6.6 8.4 H14.4 M12.4 6.4 L14.4 8.4 L12.4 10.4 M14.4 12.6 H6.6 M8.6 10.6 L6.6 12.6 L8.6 14.6" fill="none" stroke="#cfd6da" stroke-width="1.4" stroke-linecap="round" stroke-linejoin="round"/></svg>
<svg style="position:absolute;left:1204px;top:528.5px;" width="21" height="21" viewBox="0 0 21 21"><circle cx="4.5" cy="3.8" r="2.6" fill="none" stroke="#2b5d74" stroke-width="1.5"/><circle cx="4.5" cy="17.2" r="2.6" fill="none" stroke="#2b5d74" stroke-width="1.5"/><circle cx="16.5" cy="17.2" r="2.6" fill="none" stroke="#2b5d74" stroke-width="1.5"/><path d="M4.5 6.4 V14.6 M16.5 14.6 V7 Q16.5 4.5 13.5 4.5 L11 4.5 M12.8 2.2 L10.6 4.5 L12.8 6.8" fill="none" stroke="#2b5d74" stroke-width="1.5" stroke-linejoin="round"/></svg>
<svg style="position:absolute;left:1232.5px;top:528.5px;" width="21" height="21" viewBox="0 0 21 21"><path d="M3.2 9 A7.5 7.5 0 0 1 17.2 7 M17.8 12 A7.5 7.5 0 0 1 3.8 14" fill="none" stroke="#cfd6da" stroke-width="1.7"/><path d="M1.2 5.8 L3.2 9.6 L6.8 7.6 M19.8 15.2 L17.8 11.4 L14.2 13.4" fill="none" stroke="#cfd6da" stroke-width="1.5"/></svg>
<svg style="position:absolute;left:1294px;top:530.5px;" width="19" height="17" viewBox="0 0 19 17"><path d="M2 14.5 L2.8 11 L12.5 1.6 Q13.5 0.8 14.5 1.6 L15.4 2.5 Q16.2 3.5 15.4 4.5 L5.7 14 Z" fill="none" stroke="#888888" stroke-width="1.3" stroke-linejoin="round"/><path d="M10 15.3 H17" stroke="#888888" stroke-width="1.3"/></svg>
<div style="position:absolute;left:1562px;top:524.0px;width:80px;height:29px;border-radius:3px;background:#c97a4c"></div>
<div id="t2c02ceb8" class="t" style="left:1576.50px;top:533.77px;font-size:11.50px;line-height:11.50px;color:#fdf3ec;font-weight:700;">WARMED</div>
<svg style="position:absolute;left:1668px;top:528px;" width="8" height="22" viewBox="0 0 8 22"><circle cx="4" cy="3.7" r="2.3" fill="none" stroke="#30627a" stroke-width="1.4"/><circle cx="4" cy="10.8" r="2.3" fill="none" stroke="#30627a" stroke-width="1.4"/><circle cx="4" cy="18" r="2.3" fill="none" stroke="#30627a" stroke-width="1.4"/></svg>
<div style="position:absolute;left:237px;top:596.5px;width:13px;height:13px;border:2px solid #7b7b7b;border-radius:3px"></div>
<div style="position:absolute;left:294.5px;top:582.5px;width:43px;height:43px;border:1.5px solid #dddddd;border-radius:50%"></div>
<svg style="position:absolute;left:308px;top:594px;" width="22" height="22" viewBox="0 0 22 22"><path d="M3 1.5 L18.5 10.5 L3 19.5 Z" fill="rgba(200,240,225,0.35)" stroke="#4d7f6c" stroke-width="1.8" stroke-linejoin="round"/></svg>
<svg style="position:absolute;left:369.5px;top:596px;" width="23" height="17" viewBox="0 0 23 17"><path d="M2.5 15 V3.5" stroke="#4285f4" stroke-width="3.6" stroke-linecap="round"/><path d="M20.5 15 V3.5" stroke="#34a853" stroke-width="3.6" stroke-linecap="round"/><path d="M2.5 3.5 L11.5 10 L20.5 3.5" fill="none" stroke="#e24a3b" stroke-width="3.6" stroke-linecap="round" stroke-linejoin="round"/><path d="M18.2 5.2 L20.5 3.5" stroke="#f7bc15" stroke-width="3.6" stroke-linecap="round"/></svg>
<div id="t28aca0a5" class="t" style="left:403.96px;top:589.57px;font-size:13.50px;line-height:13.50px;color:#363636;font-weight:400;transform:scaleX(1.0422);">Proxy 302 - test 1</div>
<div id="td5dc60c2" class="t" style="left:405.20px;top:612.27px;font-size:11.50px;line-height:11.50px;color:#9a9a9a;font-weight:400;transform:scaleX(0.9745);">5 Nov 2025, 21:14</div>
<div style="position:absolute;left:748px;top:589.0px;width:67px;height:14px;border-radius:3px;background:#3b3a7c"></div>
<div id="ta717855a" class="t" style="left:753.25px;top:591.46px;font-size:9.50px;line-height:9.50px;color:#ffffff;font-weight:700;transform:scaleX(0.9318);letter-spacing:-0.2px;">FREE PROXY</div>
<div style="position:absolute;left:825.0px;top:590.2px;width:11.5px;height:11.5px;border-radius:50%;background:#e06666"></div>
<div id="ta93ab0e0" class="t" style="left:841.25px;top:590.00px;font-size:13.00px;line-height:13.00px;color:#333;font-weight:400;transform:scaleX(0.9886);">198.144.190.180</div>
<svg style="position:absolute;left:748px;top:611.5px;opacity:0.9" width="15" height="10" viewBox="0 0 15 10"><rect x="0" y="0.00" width="15" height="0.77" fill="#e4666b"/><rect x="0" y="0.77" width="15" height="0.77" fill="#f4d6d8"/><rect x="0" y="1.54" width="15" height="0.77" fill="#e4666b"/><rect x="0" y="2.31" width="15" height="0.77" fill="#f4d6d8"/><rect x="0" y="3.08" width="15" height="0.77" fill="#e4666b"/><rect x="0" y="3.85" width="15" height="0.77" fill="#f4d6d8"/><rect x="0" y="4.62" width="15" height="0.77" fill="#e4666b"/><rect x="0" y="5.39" width="15" height="0.77" fill="#f4d6d8"/><rect x="0" y="6.16" width="15" height="0.77" fill="#e4666b"/><rect x="0" y="6.93" width="15" height="0.77" fill="#f4d6d8"/><rect x="0" y="7.70" width="15" height="0.77" fill="#e4666b"/><rect x="0" y="8.47" width="15" height="0.77" fill="#f4d6d8"/><rect x="0" y="9.24" width="15" height="0.77" fill="#e4666b"/><rect x="0" y="0" width="6.5" height="5.4" fill="#4b5a9a"/></svg>
<div id="te8b4839e" class="t" style="left:768.00px;top:611.77px;font-size:11.50px;line-height:11.50px;color:#959595;font-weight:400;transform:scaleX(1.0346);">US (United States) Buffalo, NY 14205</div>
<svg style="position:absolute;left:1176.5px;top:594.5px;" width="21" height="21" viewBox="0 0 21 21"><circle cx="10.5" cy="10.5" r="9" fill="none" stroke="#2b5d74" stroke-width="1.8"/><path d="M6.6 8.4 H14.4 M12.4 6.4 L14.4 8.4 L12.4 10.4 M14.4 12.6 H6.6 M8.6 10.6 L6.6 12.6 L8.6 14.6" fill="none" stroke="#2b5d74" stroke-width="1.4" stroke-linecap="round" stroke-linejoin="round"/></svg>
<svg style="position:absolute;left:1204px;top:594.5px;" width="21" height="21" viewBox="0 0 21 21"><circle cx="4.5" cy="3.8" r="2.6" fill="none" stroke="#2b5d74" stroke-width="1.5"/><circle cx="4.5" cy="17.2" r="2.6" fill="none" stroke="#2b5d74" stroke-width="1.5"/><circle cx="16.5" cy="17.2" r="2.6" fill="none" stroke="#2b5d74" stroke-width="1.5"/><path d="M4.5 6.4 V14.6 M16.5 14.6 V7 Q16.5 4.5 13.5 4.5 L11 4.5 M12.8 2.2 L10.6 4.5 L12.8 6.8" fill="none" stroke="#2b5d74" stroke-width="1.5" stroke-linejoin="round"/></svg>
<svg style="position:absolute;left:1232.5px;top:594.5px;" width="21" height="21" viewBox="0 0 21 21"><path d="M3.2 9 A7.5 7.5 0 0 1 17.2 7 M17.8 12 A7.5 7.5 0 0 1 3.8 14" fill="none" stroke="#2b5d74" stroke-width="1.7"/><path d="M1.2 5.8 L3.2 9.6 L6.8 7.6 M19.8 15.2 L17.8 11.4 L14.2 13.4" fill="none" stroke="#2b5d74" stroke-width="1.5"/></svg>
<svg style="position:absolute;left:1294px;top:596.5px;" width="19" height="17" viewBox="0 0 19 17"><path d="M2 14.5 L2.8 11 L12.5 1.6 Q13.5 0.8 14.5 1.6 L15.4 2.5 Q16.2 3.5 15.4 4.5 L5.7 14 Z" fill="none" stroke="#888888" stroke-width="1.3" stroke-linejoin="round"/><path d="M10 15.3 H17" stroke="#888888" stroke-width="1.3"/></svg>
<svg style="position:absolute;left:1668px;top:594px;" width="8" height="22" viewBox="0 0 8 22"><circle cx="4" cy="3.7" r="2.3" fill="none" stroke="#30627a" stroke-width="1.4"/><circle cx="4" cy="10.8" r="2.3" fill="none" stroke="#30627a" stroke-width="1.4"/><circle cx="4" cy="18" r="2.3" fill="none" stroke="#30627a" stroke-width="1.4"/></svg>
<div style="position:absolute;left:237px;top:662.5px;width:13px;height:13px;border:2px solid #7b7b7b;border-radius:3px"></div>
<div style="position:absolute;left:294.5px;top:648.5px;width:43px;height:43px;border:1.5px solid #dddddd;border-radius:50%"></div>
<svg style="position:absolute;left:308px;top:660px;" width="22" height="22" viewBox="0 0 22 22"><path d="M3 1.5 L18.5 10.5 L3 19.5 Z" fill="rgba(200,240,225,0.35)" stroke="#4d7f6c" stroke-width="1.8" stroke-linejoin="round"/></svg>
<svg style="position:absolute;left:373px;top:659px;" width="16" height="24" viewBox="0 0 16 24"><circle cx="8" cy="4.1" r="3.2" fill="#fff4e4" stroke="#ad7a3c" stroke-width="1.3"/><path d="M4.6 8.7 Q8 7.4 11.4 8.7 Q14.2 9.9 14.4 13 V16.5 H11.2 L11 23.6 H5 L4.8 16.5 H1.6 V13 Q1.8 9.9 4.6 8.7 Z" fill="#fff4e4" stroke="#ad7a3c" stroke-width="1.3" stroke-linejoin="round"/></svg>
<div id="t2bcca6ee" class="t" style="left:403.98px;top:655.57px;font-size:13.50px;line-height:13.50px;color:#363636;font-weight:400;transform:scaleX(1.0213);">USA - Farmshop 3</div>
<div id="t83b56764" class="t" style="left:405.20px;top:678.27px;font-size:11.50px;line-height:11.50px;color:#9a9a9a;font-weight:400;transform:scaleX(0.9901);">28 Dec 2024, 14:19</div>
<div style="position:absolute;left:748px;top:655.0px;width:67px;height:14px;border-radius:3px;background:#3b3a7c"></div>
<div id="t338cc573" class="t" style="left:753.25px;top:657.46px;font-size:9.50px;line-height:9.50px;color:#ffffff;font-weight:700;transform:scaleX(0.9318);letter-spacing:-0.2px;">FREE PROXY</div>
<div style="position:absolute;left:825.0px;top:656.2px;width:11.5px;height:11.5px;border-radius:50%;background:#e06666"></div>
<div id="td9c0e181" class="t" style="left:841.25px;top:656.00px;font-size:13.00px;line-height:13.00px;color:#333;font-weight:400;transform:scaleX(0.9793);">77.81.103.43</div>
<svg style="position:absolute;left:748px;top:677.5px;" width="15" height="10" viewBox="0 0 15 10"><rect width="5" height="10" fill="#75a84d"/><rect x="5" width="5" height="10" fill="#f8f6f2"/><rect x="10" width="5" height="10" fill="#d65c63"/></svg>
<div id="t080e49f3" class="t" style="left:768.00px;top:677.77px;font-size:11.50px;line-height:11.50px;color:#959595;font-weight:400;transform:scaleX(1.0047);">IT (Italy)</div>
<svg style="position:absolute;left:1176.5px;top:660.5px;" width="21" height="21" viewBox="0 0 21 21"><circle cx="10.5" cy="10.5" r="9" fill="none" stroke="#2b5d74" stroke-width="1.8"/><path d="M6.6 8.4 H14.4 M12.4 6.4 L14.4 8.4 L12.4 10.4 M14.4 12.6 H6.6 M8.6 10.6 L6.6 12.6 L8.6 14.6" fill="none" stroke="#2b5d74" stroke-width="1.4" stroke-linecap="round" stroke-linejoin="round"/></svg>
<svg style="position:absolute;left:1204px;top:660.5px;" width="21" height="21" viewBox="0 0 21 21"><circle cx="4.5" cy="3.8" r="2.6" fill="none" stroke="#2b5d74" stroke-width="1.5"/><circle cx="4.5" cy="17.2" r="2.6" fill="none" stroke="#2b5d74" stroke-width="1.5"/><circle cx="16.5" cy="17.2" r="2.6" fill="none" stroke="#2b5d74" stroke-width="1.5"/><path d="M4.5 6.4 V14.6 M16.5 14.6 V7 Q16.5 4.5 13.5 4.5 L11 4.5 M12.8 2.2 L10.6 4.5 L12.8 6.8" fill="none" stroke="#2b5d74" stroke-width="1.5" stroke-linejoin="round"/></svg>
<svg style="position:absolute;left:1232.5px;top:660.5px;" width="21" height="21" viewBox="0 0 21 21"><path d="M3.2 9 A7.5 7.5 0 0 1 17.2 7 M17.8 12 A7.5 7.5 0 0 1 3.8 14" fill="none" stroke="#2b5d74" stroke-width="1.7"/><path d="M1.2 5.8 L3.2 9.6 L6.8 7.6 M19.8 15.2 L17.8 11.4 L14.2 13.4" fill="none" stroke="#2b5d74" stroke-width="1.5"/></svg>
<svg style="position:absolute;left:1294px;top:662.5px;" width="19" height="17" viewBox="0 0 19 17"><path d="M2 14.5 L2.8 11 L12.5 1.6 Q13.5 0.8 14.5 1.6 L15.4 2.5 Q16.2 3.5 15.4 4.5 L5.7 14 Z" fill="none" stroke="#888888" stroke-width="1.3" stroke-linejoin="round"/><path d="M10 15.3 H17" stroke="#888888" stroke-width="1.3"/></svg>
<svg style="position:absolute;left:1668px;top:660px;" width="8" height="22" viewBox="0 0 8 22"><circle cx="4" cy="3.7" r="2.3" fill="none" stroke="#30627a" stroke-width="1.4"/><circle cx="4" cy="10.8" r="2.3" fill="none" stroke="#30627a" stroke-width="1.4"/><circle cx="4" cy="18" r="2.3" fill="none" stroke="#30627a" stroke-width="1.4"/></svg>
<div style="position:absolute;left:237px;top:728.5px;width:13px;height:13px;border:2px solid #7b7b7b;border-radius:3px"></div>
<div style="position:absolute;left:294.5px;top:714.5px;width:43px;height:43px;border:1.5px solid #dddddd;border-radius:50%"></div>
<svg style="position:absolute;left:308px;top:726px;" width="22" height="22" viewBox="0 0 22 22"><path d="M3 1.5 L18.5 10.5 L3 19.5 Z" fill="rgba(200,240,225,0.35)" stroke="#4d7f6c" stroke-width="1.8" stroke-linejoin="round"/></svg>
<svg style="position:absolute;left:373px;top:725px;" width="16" height="24" viewBox="0 0 16 24"><circle cx="8" cy="4.1" r="3.2" fill="#f8eefc" stroke="#9a50b3" stroke-width="1.3"/><path d="M4.6 8.7 Q8 7.4 11.4 8.7 Q14.2 9.9 14.4 13 V16.5 H11.2 L11 23.6 H5 L4.8 16.5 H1.6 V13 Q1.8 9.9 4.6 8.7 Z" fill="#f8eefc" stroke="#9a50b3" stroke-width="1.3" stroke-linejoin="round"/></svg>
<div id="t60a624ab" class="t" style="left:403.98px;top:721.57px;font-size:13.50px;line-height:13.50px;color:#363636;font-weight:400;transform:scaleX(1.0213);">USA - Farmshop 6</div>
<div id="t3b9d85fc" class="t" style="left:404.20px;top:744.27px;font-size:11.50px;line-height:11.50px;color:#9a9a9a;font-weight:400;transform:scaleX(0.9948);">13 Dec 2024, 22:25</div>
<div style="position:absolute;left:748px;top:721.0px;width:67px;height:14px;border-radius:3px;background:#3b3a7c"></div>
<div id="t7d10c758" class="t" style="left:753.25px;top:723.46px;font-size:9.50px;line-height:9.50px;color:#ffffff;font-weight:700;transform:scaleX(0.9318);letter-spacing:-0.2px;">FREE PROXY</div>
<div style="position:absolute;left:825.0px;top:722.2px;width:11.5px;height:11.5px;border-radius:50%;background:#e06666"></div>
<div id="taf30c4da" class="t" style="left:841.25px;top:722.00px;font-size:13.00px;line-height:13.00px;color:#333;font-weight:400;transform:scaleX(0.9548);">45.131.102.186</div>
<svg style="position:absolute;left:748px;top:743.5px;" width="15" height="10" viewBox="0 0 15 10"><rect width="15" height="10" fill="#c4575c"/><rect y="4" width="15" height="2" fill="#f1e3e3"/></svg>
<div id="t5cdff14e" class="t" style="left:768.00px;top:743.77px;font-size:11.50px;line-height:11.50px;color:#959595;font-weight:400;transform:scaleX(0.9894);">LV (Latvia) Riga, LV-1063</div>
<svg style="position:absolute;left:1176.5px;top:726.5px;" width="21" height="21" viewBox="0 0 21 21"><circle cx="10.5" cy="10.5" r="9" fill="none" stroke="#2b5d74" stroke-width="1.8"/><path d="M6.6 8.4 H14.4 M12.4 6.4 L14.4 8.4 L12.4 10.4 M14.4 12.6 H6.6 M8.6 10.6 L6.6 12.6 L8.6 14.6" fill="none" stroke="#2b5d74" stroke-width="1.4" stroke-linecap="round" stroke-linejoin="round"/></svg>
<svg style="position:absolute;left:1204px;top:726.5px;" width="21" height="21" viewBox="0 0 21 21"><circle cx="4.5" cy="3.8" r="2.6" fill="none" stroke="#2b5d74" stroke-width="1.5"/><circle cx="4.5" cy="17.2" r="2.6" fill="none" stroke="#2b5d74" stroke-width="1.5"/><circle cx="16.5" cy="17.2" r="2.6" fill="none" stroke="#2b5d74" stroke-width="1.5"/><path d="M4.5 6.4 V14.6 M16.5 14.6 V7 Q16.5 4.5 13.5 4.5 L11 4.5 M12.8 2.2 L10.6 4.5 L12.8 6.8" fill="none" stroke="#2b5d74" stroke-width="1.5" stroke-linejoin="round"/></svg>
<svg style="position:absolute;left:1232.5px;top:726.5px;" width="21" height="21" viewBox="0 0 21 21"><path d="M3.2 9 A7.5 7.5 0 0 1 17.2 7 M17.8 12 A7.5 7.5 0 0 1 3.8 14" fill="none" stroke="#2b5d74" stroke-width="1.7"/><path d="M1.2 5.8 L3.2 9.6 L6.8 7.6 M19.8 15.2 L17.8 11.4 L14.2 13.4" fill="none" stroke="#2b5d74" stroke-width="1.5"/></svg>
<svg style="position:absolute;left:1294px;top:728.5px;" width="19" height="17" viewBox="0 0 19 17"><path d="M2 14.5 L2.8 11 L12.5 1.6 Q13.5 0.8 14.5 1.6 L15.4 2.5 Q16.2 3.5 15.4 4.5 L5.7 14 Z" fill="none" stroke="#888888" stroke-width="1.3" stroke-linejoin="round"/><path d="M10 15.3 H17" stroke="#888888" stroke-width="1.3"/></svg>
<svg style="position:absolute;left:1668px;top:726px;" width="8" height="22" viewBox="0 0 8 22"><circle cx="4" cy="3.7" r="2.3" fill="none" stroke="#30627a" stroke-width="1.4"/><circle cx="4" cy="10.8" r="2.3" fill="none" stroke="#30627a" stroke-width="1.4"/><circle cx="4" cy="18" r="2.3" fill="none" stroke="#30627a" stroke-width="1.4"/></svg>
<div style="position:absolute;left:237px;top:794.5px;width:13px;height:13px;border:2px solid #7b7b7b;border-radius:3px"></div>
<div style="position:absolute;left:294.5px;top:780.5px;width:43px;height:43px;border:1.5px solid #dddddd;border-radius:50%"></div>
<svg style="position:absolute;left:308px;top:792px;" width="22" height="22" viewBox="0 0 22 22"><path d="M3 1.5 L18.5 10.5 L3 19.5 Z" fill="none" stroke="#858585" stroke-width="1.8" stroke-linejoin="round"/></svg>
<svg style="position:absolute;left:373px;top:791px;" width="16" height="24" viewBox="0 0 16 24"><circle cx="8" cy="4.1" r="3.2" fill="#fdf6f6" stroke="#8a3440" stroke-width="1.3"/><path d="M4.6 8.7 Q8 7.4 11.4 8.7 Q14.2 9.9 14.4 13 V16.5 H11.2 L11 23.6 H5 L4.8 16.5 H1.6 V13 Q1.8 9.9 4.6 8.7 Z" fill="#fdf6f6" stroke="#8a3440" stroke-width="1.3" stroke-linejoin="round"/></svg>
<div id="t1f3d1636" class="t" style="left:403.95px;top:787.57px;font-size:13.50px;line-height:13.50px;color:#363636;font-weight:400;transform:scaleX(1.0521);">Desktop preset 5</div>
<div id="t6322fa59" class="t" style="left:404.20px;top:810.27px;font-size:11.50px;line-height:11.50px;color:#9a9a9a;font-weight:400;transform:scaleX(0.9948);">13 Dec 2024, 22:25</div>
<div style="position:absolute;left:748px;top:787.0px;width:50px;height:14px;border-radius:3px;background:#8b8b8b"></div>
<div id="tbdfd1d70" class="t" style="left:753.25px;top:789.46px;font-size:9.50px;line-height:9.50px;color:#ffffff;font-weight:700;transform:scaleX(0.9710);letter-spacing:-0.2px;">NOT SET</div>
<svg style="position:absolute;left:748px;top:809.5px;" width="15" height="10" viewBox="0 0 15 10"><rect x="0.6" y="0.6" width="13.8" height="8.8" fill="#fff" stroke="#333" stroke-width="1.1"/><circle cx="7.5" cy="5" r="2" fill="#555"/></svg>
<div id="t96b3d25e" class="t" style="left:768.00px;top:809.77px;font-size:11.50px;line-height:11.50px;color:#959595;font-weight:400;transform:scaleX(1.0754);">No geolocation data yet</div>
<svg style="position:absolute;left:1176.5px;top:792.5px;" width="21" height="21" viewBox="0 0 21 21"><circle cx="10.5" cy="10.5" r="9" fill="none" stroke="#cfd6da" stroke-width="1.8"/><path d="M6.6 8.4 H14.4 M12.4 6.4 L14.4 8.4 L12.4 10.4 M14.4 12.6 H6.6 M8.6 10.6 L6.6 12.6 L8.6 14.6" fill="none" stroke="#cfd6da" stroke-width="1.4" stroke-linecap="round" stroke-linejoin="round"/></svg>
<svg style="position:absolute;left:1204px;top:792.5px;" width="21" height="21" viewBox="0 0 21 21"><circle cx="4.5" cy="3.8" r="2.6" fill="none" stroke="#2b5d74" stroke-width="1.5"/><circle cx="4.5" cy="17.2" r="2.6" fill="none" stroke="#2b5d74" stroke-width="1.5"/><circle cx="16.5" cy="17.2" r="2.6" fill="none" stroke="#2b5d74" stroke-width="1.5"/><path d="M4.5 6.4 V14.6 M16.5 14.6 V7 Q16.5 4.5 13.5 4.5 L11 4.5 M12.8 2.2 L10.6 4.5 L12.8 6.8" fill="none" stroke="#2b5d74" stroke-width="1.5" stroke-linejoin="round"/></svg>
<svg style="position:absolute;left:1232.5px;top:792.5px;" width="21" height="21" viewBox="0 0 21 21"><path d="M3.2 9 A7.5 7.5 0 0 1 17.2 7 M17.8 12 A7.5 7.5 0 0 1 3.8 14" fill="none" stroke="#cfd6da" stroke-width="1.7"/><path d="M1.2 5.8 L3.2 9.6 L6.8 7.6 M19.8 15.2 L17.8 11.4 L14.2 13.4" fill="none" stroke="#cfd6da" stroke-width="1.5"/></svg>
<svg style="position:absolute;left:1294px;top:794.5px;" width="19" height="17" viewBox="0 0 19 17"><path d="M2 14.5 L2.8 11 L12.5 1.6 Q13.5 0.8 14.5 1.6 L15.4 2.5 Q16.2 3.5 15.4 4.5 L5.7 14 Z" fill="none" stroke="#888888" stroke-width="1.3" stroke-linejoin="round"/><path d="M10 15.3 H17" stroke="#888888" stroke-width="1.3"/></svg>
<svg style="position:absolute;left:1668px;top:792px;" width="8" height="22" viewBox="0 0 8 22"><circle cx="4" cy="3.7" r="2.3" fill="none" stroke="#30627a" stroke-width="1.4"/><circle cx="4" cy="10.8" r="2.3" fill="none" stroke="#30627a" stroke-width="1.4"/><circle cx="4" cy="18" r="2.3" fill="none" stroke="#30627a" stroke-width="1.4"/></svg>
<div style="position:absolute;left:237px;top:860.5px;width:13px;height:13px;border:2px solid #7b7b7b;border-radius:3px"></div>
<div style="position:absolute;left:294.5px;top:846.5px;width:43px;height:43px;border:1.5px solid #dddddd;border-radius:50%"></div>
<svg style="position:absolute;left:308px;top:858px;" width="22" height="22" viewBox="0 0 22 22"><path d="M3 1.5 L18.5 10.5 L3 19.5 Z" fill="rgba(200,240,225,0.35)" stroke="#4d7f6c" stroke-width="1.8" stroke-linejoin="round"/></svg>
<svg style="position:absolute;left:369px;top:857px;" width="24" height="24" viewBox="0 0 24 24"><rect x="0" y="0" width="24" height="23.5" rx="3" fill="#3b5a9a"/><path d="M9.6 23.5 V13 H6.8 V9.6 H9.6 V7.2 Q9.6 2.6 14.2 2.6 L17.2 2.7 V6 H15.2 Q13.8 6 13.8 7.4 V9.6 H17 L16.6 13 H13.8 V23.5 Z" fill="#fff"/></svg>
<div id="t84e91110" class="t" style="left:405.00px;top:853.57px;font-size:13.50px;line-height:13.50px;color:#363636;font-weight:400;transform:scaleX(1.0218);">&#1058;&#1077;&#1089;&#1090;&#1086;&#1074;&#1072;&#1103; &#1089;&#1077;&#1089;&#1089;&#1080;&#1103;</div>
<div id="t5f2f30a4" class="t" style="left:404.20px;top:876.27px;font-size:11.50px;line-height:11.50px;color:#9a9a9a;font-weight:400;transform:scaleX(0.9948);">13 Dec 2024, 22:25</div>
<div style="position:absolute;left:748px;top:853.0px;width:67px;height:14px;border-radius:3px;background:#3b3a7c"></div>
<div id="tc6d5bf86" class="t" style="left:753.25px;top:855.46px;font-size:9.50px;line-height:9.50px;color:#ffffff;font-weight:700;transform:scaleX(0.9318);letter-spacing:-0.2px;">FREE PROXY</div>
<div style="position:absolute;left:825.0px;top:854.2px;width:11.5px;height:11.5px;border-radius:50%;background:#e06666"></div>
<div id="t7962de53" class="t" style="left:841.25px;top:854.00px;font-size:13.00px;line-height:13.00px;color:#333;font-weight:400;transform:scaleX(1.0109);">212.42.203.130</div>
<svg style="position:absolute;left:748px;top:875.5px;opacity:0.9" width="15" height="10" viewBox="0 0 15 10"><rect x="0" y="0.00" width="15" height="0.77" fill="#e4666b"/><rect x="0" y="0.77" width="15" height="0.77" fill="#f4d6d8"/><rect x="0" y="1.54" width="15" height="0.77" fill="#e4666b"/><rect x="0" y="2.31" width="15" height="0.77" fill="#f4d6d8"/><rect x="0" y="3.08" width="15" height="0.77" fill="#e4666b"/><rect x="0" y="3.85" width="15" height="0.77" fill="#f4d6d8"/><rect x="0" y="4.62" width="15" height="0.77" fill="#e4666b"/><rect x="0" y="5.39" width="15" height="0.77" fill="#f4d6d8"/><rect x="0" y="6.16" width="15" height="0.77" fill="#e4666b"/><rect x="0" y="6.93" width="15" height="0.77" fill="#f4d6d8"/><rect x="0" y="7.70" width="15" height="0.77" fill="#e4666b"/><rect x="0" y="8.47" width="15" height="0.77" fill="#f4d6d8"/><rect x="0" y="9.24" width="15" height="0.77" fill="#e4666b"/><rect x="0" y="0" width="6.5" height="5.4" fill="#4b5a9a"/></svg>
<div id="t4fcfd7a6" class="t" style="left:768.00px;top:875.77px;font-size:11.50px;line-height:11.50px;color:#959595;font-weight:400;transform:scaleX(1.0328);">US (United States) Los Angeles, CA 90060</div>
<svg style="position:absolute;left:1176.5px;top:858.5px;" width="21" height="21" viewBox="0 0 21 21"><circle cx="10.5" cy="10.5" r="9" fill="none" stroke="#2b5d74" stroke-width="1.8"/><path d="M6.6 8.4 H14.4 M12.4 6.4 L14.4 8.4 L12.4 10.4 M14.4 12.6 H6.6 M8.6 10.6 L6.6 12.6 L8.6 14.6" fill="none" stroke="#2b5d74" stroke-width="1.4" stroke-linecap="round" stroke-linejoin="round"/></svg>
<svg style="position:absolute;left:1204px;top:858.5px;" width="21" height="21" viewBox="0 0 21 21"><circle cx="4.5" cy="3.8" r="2.6" fill="none" stroke="#2b5d74" stroke-width="1.5"/><circle cx="4.5" cy="17.2" r="2.6" fill="none" stroke="#2b5d74" stroke-width="1.5"/><circle cx="16.5" cy="17.2" r="2.6" fill="none" stroke="#2b5d74" stroke-width="1.5"/><path d="M4.5 6.4 V14.6 M16.5 14.6 V7 Q16.5 4.5 13.5 4.5 L11 4.5 M12.8 2.2 L10.6 4.5 L12.8 6.8" fill="none" stroke="#2b5d74" stroke-width="1.5" stroke-linejoin="round"/></svg>
<svg style="position:absolute;left:1232.5px;top:858.5px;" width="21" height="21" viewBox="0 0 21 21"><path d="M3.2 9 A7.5 7.5 0 0 1 17.2 7 M17.8 12 A7.5 7.5 0 0 1 3.8 14" fill="none" stroke="#2b5d74" stroke-width="1.7"/><path d="M1.2 5.8 L3.2 9.6 L6.8 7.6 M19.8 15.2 L17.8 11.4 L14.2 13.4" fill="none" stroke="#2b5d74" stroke-width="1.5"/></svg>
<svg style="position:absolute;left:1294px;top:860.5px;" width="19" height="17" viewBox="0 0 19 17"><path d="M2 14.5 L2.8 11 L12.5 1.6 Q13.5 0.8 14.5 1.6 L15.4 2.5 Q16.2 3.5 15.4 4.5 L5.7 14 Z" fill="none" stroke="#888888" stroke-width="1.3" stroke-linejoin="round"/><path d="M10 15.3 H17" stroke="#888888" stroke-width="1.3"/></svg>
<svg style="position:absolute;left:1668px;top:858px;" width="8" height="22" viewBox="0 0 8 22"><circle cx="4" cy="3.7" r="2.3" fill="none" stroke="#30627a" stroke-width="1.4"/><circle cx="4" cy="10.8" r="2.3" fill="none" stroke="#30627a" stroke-width="1.4"/><circle cx="4" cy="18" r="2.3" fill="none" stroke="#30627a" stroke-width="1.4"/></svg>
<div style="position:absolute;left:237px;top:926.5px;width:13px;height:13px;border:2px solid #7b7b7b;border-radius:3px"></div>
<div style="position:absolute;left:294.5px;top:912.5px;width:43px;height:43px;border:1.5px solid #dddddd;border-radius:50%"></div>
<svg style="position:absolute;left:308px;top:924px;" width="22" height="22" viewBox="0 0 22 22"><path d="M3 1.5 L18.5 10.5 L3 19.5 Z" fill="none" stroke="#858585" stroke-width="1.8" stroke-linejoin="round"/></svg>
<svg style="position:absolute;left:369px;top:923px;" width="24" height="24" viewBox="0 0 24 24"><rect x="0" y="0" width="24" height="23.5" rx="3" fill="#3b5a9a"/><path d="M9.6 23.5 V13 H6.8 V9.6 H9.6 V7.2 Q9.6 2.6 14.2 2.6 L17.2 2.7 V6 H15.2 Q13.8 6 13.8 7.4 V9.6 H17 L16.6 13 H13.8 V23.5 Z" fill="#fff"/></svg>
<div id="t1e2384ab" class="t" style="left:403.96px;top:919.57px;font-size:13.50px;line-height:13.50px;color:#363636;font-weight:400;transform:scaleX(1.0424);">D2 - Farmshop 2</div>
<div id="tff3a887e" class="t" style="left:404.20px;top:942.27px;font-size:11.50px;line-height:11.50px;color:#9a9a9a;font-weight:400;transform:scaleX(0.9944);">13 Dec 2024, 22:24</div>
<div style="position:absolute;left:748px;top:919.0px;width:50px;height:14px;border-radius:3px;background:#8b8b8b"></div>
<div id="t2115df68" class="t" style="left:753.25px;top:921.46px;font-size:9.50px;line-height:9.50px;color:#ffffff;font-weight:700;transform:scaleX(0.9710);letter-spacing:-0.2px;">NOT SET</div>
<svg style="position:absolute;left:748px;top:941.5px;" width="15" height="10" viewBox="0 0 15 10"><rect x="0.6" y="0.6" width="13.8" height="8.8" fill="#fff" stroke="#333" stroke-width="1.1"/><circle cx="7.5" cy="5" r="2" fill="#555"/></svg>
<div id="tcb3f34d3" class="t" style="left:768.00px;top:941.77px;font-size:11.50px;line-height:11.50px;color:#959595;font-weight:400;transform:scaleX(1.0754);">No geolocation data yet</div>
<svg style="position:absolute;left:1176.5px;top:924.5px;" width="21" height="21" viewBox="0 0 21 21"><circle cx="10.5" cy="10.5" r="9" fill="none" stroke="#cfd6da" stroke-width="1.8"/><path d="M6.6 8.4 H14.4 M12.4 6.4 L14.4 8.4 L12.4 10.4 M14.4 12.6 H6.6 M8.6 10.6 L6.6 12.6 L8.6 14.6" fill="none" stroke="#cfd6da" stroke-width="1.4" stroke-linecap="round" stroke-linejoin="round"/></svg>
<svg style="position:absolute;left:1204px;top:924.5px;" width="21" height="21" viewBox="0 0 21 21"><circle cx="4.5" cy="3.8" r="2.6" fill="none" stroke="#2b5d74" stroke-width="1.5"/><circle cx="4.5" cy="17.2" r="2.6" fill="none" stroke="#2b5d74" stroke-width="1.5"/><circle cx="16.5" cy="17.2" r="2.6" fill="none" stroke="#2b5d74" stroke-width="1.5"/><path d="M4.5 6.4 V14.6 M16.5 14.6 V7 Q16.5 4.5 13.5 4.5 L11 4.5 M12.8 2.2 L10.6 4.5 L12.8 6.8" fill="none" stroke="#2b5d74" stroke-width="1.5" stroke-linejoin="round"/></svg>
<svg style="position:absolute;left:1232.5px;top:924.5px;" width="21" height="21" viewBox="0 0 21 21"><path d="M3.2 9 A7.5 7.5 0 0 1 17.2 7 M17.8 12 A7.5 7.5 0 0 1 3.8 14" fill="none" stroke="#cfd6da" stroke-width="1.7"/><path d="M1.2 5.8 L3.2 9.6 L6.8 7.6 M19.8 15.2 L17.8 11.4 L14.2 13.4" fill="none" stroke="#cfd6da" stroke-width="1.5"/></svg>
<svg style="position:absolute;left:1294px;top:926.5px;" width="19" height="17" viewBox="0 0 19 17"><path d="M2 14.5 L2.8 11 L12.5 1.6 Q13.5 0.8 14.5 1.6 L15.4 2.5 Q16.2 3.5 15.4 4.5 L5.7 14 Z" fill="none" stroke="#888888" stroke-width="1.3" stroke-linejoin="round"/><path d="M10 15.3 H17" stroke="#888888" stroke-width="1.3"/></svg>
<svg style="position:absolute;left:1668px;top:924px;" width="8" height="22" viewBox="0 0 8 22"><circle cx="4" cy="3.7" r="2.3" fill="none" stroke="#30627a" stroke-width="1.4"/><circle cx="4" cy="10.8" r="2.3" fill="none" stroke="#30627a" stroke-width="1.4"/><circle cx="4" cy="18" r="2.3" fill="none" stroke="#30627a" stroke-width="1.4"/></svg>
<div style="position:absolute;left:1914px;top:242px;width:5px;height:545px;border-radius:3px 0 0 3px;background:#175fae"></div>
<div style="position:absolute;left:1458px;top:548px;width:252px;height:430px;background:#fff;border-radius:4px;box-shadow:0 0 6px rgba(0,0,0,0.10)"></div>
<div id="te8e97aa4" class="t" style="left:1471.70px;top:565.07px;font-size:13.50px;line-height:13.50px;color:#555;font-weight:400;transform:scaleX(1.0544);">Export cookies</div>
<svg style="position:absolute;left:1677px;top:562px;" width="19" height="18" viewBox="0 0 19 18"><path d="M3 6.5 L4.5 2 H14.5 L16 6.5 V16 H13 M6 16 H3 V6.5 H16 M9.5 2 V6.5 M9.5 15.5 V9.5 M7.2 11.8 L9.5 9.5 L11.8 11.8" fill="none" stroke="#35647e" stroke-width="1.3"/></svg>
<div id="t17fdc395" class="t" style="left:1471.70px;top:601.07px;font-size:13.50px;line-height:13.50px;color:#555;font-weight:400;transform:scaleX(1.0459);">Remove all data</div>
<svg style="position:absolute;left:1677px;top:598px;" width="19" height="18" viewBox="0 0 19 18"><ellipse cx="8.5" cy="4" rx="6.5" ry="2.5" fill="none" stroke="#35647e" stroke-width="1.3"/><path d="M2 4 V13.5 Q2 16 8.5 16 M15 4 V9 M2 8.5 Q2 11 8.5 11 Q11 11 12.5 10.5" fill="none" stroke="#35647e" stroke-width="1.3"/><path d="M12.5 12.5 L17.5 17.5 M17.5 12.5 L12.5 17.5" stroke="#2a66a8" stroke-width="1.5"/></svg>
<div id="ta21c36f5" class="t" style="left:1472.25px;top:644.07px;font-size:13.50px;line-height:13.50px;color:#555;font-weight:400;transform:scaleX(0.9972);">Change IP</div>
<svg style="position:absolute;left:1677px;top:641px;" width="19" height="18" viewBox="0 0 19 18"><path d="M3.2 7.8 A6.5 6.5 0 0 1 15.5 6.2 M15.8 10.5 A6.5 6.5 0 0 1 3.5 12" fill="none" stroke="#35647e" stroke-width="1.4"/><path d="M1.5 5 L3.2 8.4 L6.3 6.6 M17.5 13.2 L15.8 9.8 L12.7 11.6" fill="none" stroke="#35647e" stroke-width="1.3"/></svg>
<div id="t135bc402" class="t" style="left:1471.26px;top:680.07px;font-size:13.50px;line-height:13.50px;color:#aaa;font-weight:400;transform:scaleX(0.9897);">IPQS check</div>
<svg style="position:absolute;left:1677px;top:677px;" width="19" height="18" viewBox="0 0 19 18"><circle cx="9.5" cy="9" r="7.3" fill="none" stroke="#d0d6da" stroke-width="1.2"/><path d="M6 7.5 H12.5 M11 6 L12.5 7.5 M13 10.5 H6.5 M8 12 L6.5 10.5" fill="none" stroke="#d0d6da" stroke-width="1.1"/></svg>
<div id="t6bfbea46" class="t" style="left:1472.25px;top:723.07px;font-size:13.50px;line-height:13.50px;color:#555;font-weight:400;transform:scaleX(1.0571);">Warm up</div>
<svg style="position:absolute;left:1677px;top:720px;" width="19" height="18" viewBox="0 0 19 18"><path d="M9.5 1.5 Q9 5 6.5 7.5 Q4 10 4.5 12.5 Q5.5 17 9.5 17 Q14.5 17 14.5 11.5 Q14.5 8.5 12 6.5 Q12 9 10.5 9.5 Q11.5 5 9.5 1.5Z" fill="none" stroke="#35647e" stroke-width="1.3" stroke-linejoin="round"/></svg>
<div id="t8a49267d" class="t" style="left:1471.68px;top:759.07px;font-size:13.50px;line-height:13.50px;color:#555;font-weight:400;transform:scaleX(1.0726);">Move to desktop</div>
<svg style="position:absolute;left:1677px;top:756px;" width="19" height="18" viewBox="0 0 19 18"><rect x="6" y="1.5" width="11" height="11" rx="0.8" fill="none" stroke="#35647e" stroke-width="1.3"/><rect x="2" y="5.5" width="11" height="11" rx="0.8" fill="#fff" stroke="#35647e" stroke-width="1.3"/><circle cx="7.5" cy="9.5" r="1.7" fill="none" stroke="#35647e" stroke-width="1.2"/><path d="M4.3 15.8 Q7.5 11.5 10.7 15.8" fill="none" stroke="#35647e" stroke-width="1.2"/></svg>
<div id="t49ac9370" class="t" style="left:1472.25px;top:795.07px;font-size:13.50px;line-height:13.50px;color:#555;font-weight:400;transform:scaleX(1.0315);">Clone</div>
<svg style="position:absolute;left:1677px;top:792px;" width="19" height="18" viewBox="0 0 19 18"><rect x="2" y="2" width="12" height="12" rx="1" fill="none" stroke="#35647e" stroke-width="1.3"/><path d="M16.5 4.5 V16.5 H4.5" fill="none" stroke="#35647e" stroke-width="1.3"/></svg>
<div id="tcb67a895" class="t" style="left:1471.25px;top:831.07px;font-size:13.50px;line-height:13.50px;color:#555;font-weight:400;transform:scaleX(1.0658);">Share</div>
<svg style="position:absolute;left:1677px;top:828px;" width="19" height="18" viewBox="0 0 19 18"><path d="M17 2 L2 7.5 L8 10 L10.5 16 Z M17 2 L8 10" fill="none" stroke="#35647e" stroke-width="1.3" stroke-linejoin="round"/></svg>
<div id="tf4eb606e" class="t" style="left:1472.25px;top:867.07px;font-size:13.50px;line-height:13.50px;color:#555;font-weight:400;transform:scaleX(1.0430);">Send to Nooklz</div>
<svg style="position:absolute;left:1677px;top:864px;" width="19" height="18" viewBox="0 0 19 18"><path d="M3 15 V9.5 A6.5 6.5 0 0 1 16 9.5 V15 M3 15 H6.5 V11.5 Q8 10 9.5 11.5 V15 H13 L15.5 12.5" fill="none" stroke="#35647e" stroke-width="1.3" stroke-linejoin="round"/></svg>
<div id="t469b1550" class="t" style="left:1471.61px;top:910.07px;font-size:13.50px;line-height:13.50px;color:#555;font-weight:400;transform:scaleX(1.1378);">Pin/Unpin</div>
<svg style="position:absolute;left:1677px;top:907px;" width="19" height="18" viewBox="0 0 19 18"><path d="M11 1.5 L17 7.5 L14.5 8.5 L11.5 11.5 L11.5 14.5 L4 7 L7 7 L10 4 Z M7.5 10.5 L2 16.5" fill="none" stroke="#35647e" stroke-width="1.3" stroke-linejoin="round"/></svg>
<div id="t9abec535" class="t" style="left:1471.65px;top:946.07px;font-size:13.50px;line-height:13.50px;color:#555;font-weight:400;transform:scaleX(1.0989);">Move to trash</div>
<svg style="position:absolute;left:1677px;top:943px;" width="19" height="18" viewBox="0 0 19 18"><path d="M2.5 4 H16.5 M7 4 V1.8 H12 V4 M4 4 L4.8 16.5 H14.2 L15 4 M7.5 7.5 V13.5 M11.5 7.5 V13.5" fill="none" stroke="#e8a3a3" stroke-width="1.3"/></svg>
<div style="position:absolute;left:1464px;top:628px;width:240px;height:1.5px;background:#e9ecef"></div>
<div style="position:absolute;left:1464px;top:708px;width:240px;height:1.5px;background:#e9ecef"></div>
<div style="position:absolute;left:1464px;top:894px;width:240px;height:1.5px;background:#e9ecef"></div>
<div style="position:absolute;left:0;top:977px;width:1919px;height:64px;background:#fff;box-shadow:0 -2px 5px rgba(0,0,0,0.05)"></div>
<div style="position:absolute;left:236px;top:1001px;width:17px;height:17px;border-radius:3.5px;background:#1c4f8e"></div>
<div style="position:absolute;left:239.5px;top:1008px;width:10px;height:3px;background:#fff"></div>
<div id="t3af5ea78" class="t" style="left:261.00px;top:1002.57px;font-size:13.50px;line-height:13.50px;color:#8a8a8a;font-weight:400;transform:scaleX(1.0490);">2 selected sessions</div>
<div style="position:absolute;left:875px;top:992px;width:93px;height:34px;border:1px solid #d8d8d8;border-radius:4px;background:#fff"></div>
<svg style="position:absolute;left:890px;top:1001px;" width="18" height="18" viewBox="0 0 18 18"><path d="M3 1.5 L16 9 L3 16.5Z" fill="#fff" stroke="#5c8272" stroke-width="1.5" stroke-linejoin="round"/></svg>
<div id="t3b91611f" class="t" style="left:916.00px;top:1003.15px;font-size:14.00px;line-height:14.00px;color:#3a3a3a;font-weight:700;transform:scaleX(0.8784);">START</div>
<div style="position:absolute;left:982px;top:992px;width:85px;height:34px;border:1px solid #e6e6e6;border-radius:4px;background:#fff"></div>
<div style="position:absolute;left:997px;top:1002px;width:13px;height:13px;border:1.4px solid #e5b5b5;border-radius:1px"></div>
<div id="te27c0db1" class="t" style="left:1023.25px;top:1003.15px;font-size:14.00px;line-height:14.00px;color:#9a9a9a;font-weight:700;transform:scaleX(0.8805);">STOP</div>
<div style="position:absolute;left:1082px;top:992px;width:141px;height:34px;border:1px solid #d8d8d8;border-radius:4px;background:#fff"></div>
<svg style="position:absolute;left:1094px;top:999px;" width="22" height="22" viewBox="0 0 22 22"><circle cx="11" cy="11" r="9.3" fill="none" stroke="#2a6f96" stroke-width="1.6"/><path d="M6.6 8.8 H15.4 M13.2 6.6 L15.4 8.8 L13.2 11 M15.4 13.2 H6.6 M8.8 11 L6.6 13.2 L8.8 15.4" fill="none" stroke="#2a6f96" stroke-width="1.4" stroke-linecap="round" stroke-linejoin="round"/></svg>
<div id="t767d217e" class="t" style="left:1123.25px;top:1003.15px;font-size:14.00px;line-height:14.00px;color:#3a3a3a;font-weight:700;transform:scaleX(0.8586);">CHECK PROXY</div>
<div style="position:absolute;left:1237px;top:992px;width:170px;height:34px;border:1px solid #d8d8d8;border-radius:4px;background:#fff"></div>
<svg style="position:absolute;left:1250px;top:1000px;" width="20" height="20" viewBox="0 0 20 20"><circle cx="10" cy="10" r="8.5" fill="none" stroke="#2a6f96" stroke-width="1.5"/><path d="M10 14.5 V5.8 M6.8 9 L10 5.8 L13.2 9" fill="none" stroke="#2a6f96" stroke-width="1.5" stroke-linecap="round"/></svg>
<div id="tbea3238f" class="t" style="left:1278.00px;top:1003.15px;font-size:14.00px;line-height:14.00px;color:#3a3a3a;font-weight:700;transform:scaleX(0.9035);">MODIFY SESSIONS</div>
<div style="position:absolute;left:1420px;top:992px;width:124px;height:34px;border:1px solid #d8d8d8;border-radius:4px;background:#fff"></div>
<svg style="position:absolute;left:1432px;top:999px;" width="22" height="22" viewBox="0 0 22 22"><circle cx="4.5" cy="3.8" r="2.5" fill="none" stroke="#2a6f96" stroke-width="1.5"/><circle cx="4.5" cy="18" r="2.5" fill="none" stroke="#2a6f96" stroke-width="1.5"/><circle cx="17" cy="18" r="2.5" fill="none" stroke="#2a6f96" stroke-width="1.5"/><path d="M4.5 6.3 V15.5 M17 15.5 V7.5 Q17 5 14 5 L11.5 5 M13.3 2.7 L11.1 5 L13.3 7.3" fill="none" stroke="#2a6f96" stroke-width="1.5"/></svg>
<div id="t25cf6c73" class="t" style="left:1461.25px;top:1003.15px;font-size:14.00px;line-height:14.00px;color:#3a3a3a;font-weight:700;transform:scaleX(0.8715);">SET PROXY</div>
<div style="position:absolute;left:1557px;top:992px;width:151px;height:34px;border:1px solid #8a8a8a;border-radius:4px;background:#fff"></div>
<div id="tbd5a892c" class="t" style="left:1570.92px;top:1001.96px;font-size:16.00px;line-height:16.00px;color:#333;font-weight:400;transform:scaleX(1.0752);">More actions</div>
<svg style="position:absolute;left:1681px;top:1005px;" width="10" height="8" viewBox="0 0 10 8"><path d="M1 7 L9 7 L5 1Z" fill="#222"/></svg>
<div style="position:absolute;left:175.5px;top:291.5px;width:113.5px;height:161.5px;border:3px solid #0b0b84"></div>
<div style="position:absolute;left:1450px;top:537px;width:265px;height:434px;border:3px solid #0b0b84"></div>
<div style="position:absolute;left:192px;top:976px;width:1526px;height:58px;border:3px solid #0b0b84"></div>
<svg style="position:absolute;left:0px;top:0px;pointer-events:none" width="1919" height="1041" viewBox="0 0 1919 1041"><line x1="294.5" y1="451.5" x2="1366" y2="971.5" stroke="#0b0b84" stroke-width="3"/><path d="M1376 976.5 L1360.5 974.5 L1366 965 Z" fill="#1414cf"/></svg>
</body></html>
